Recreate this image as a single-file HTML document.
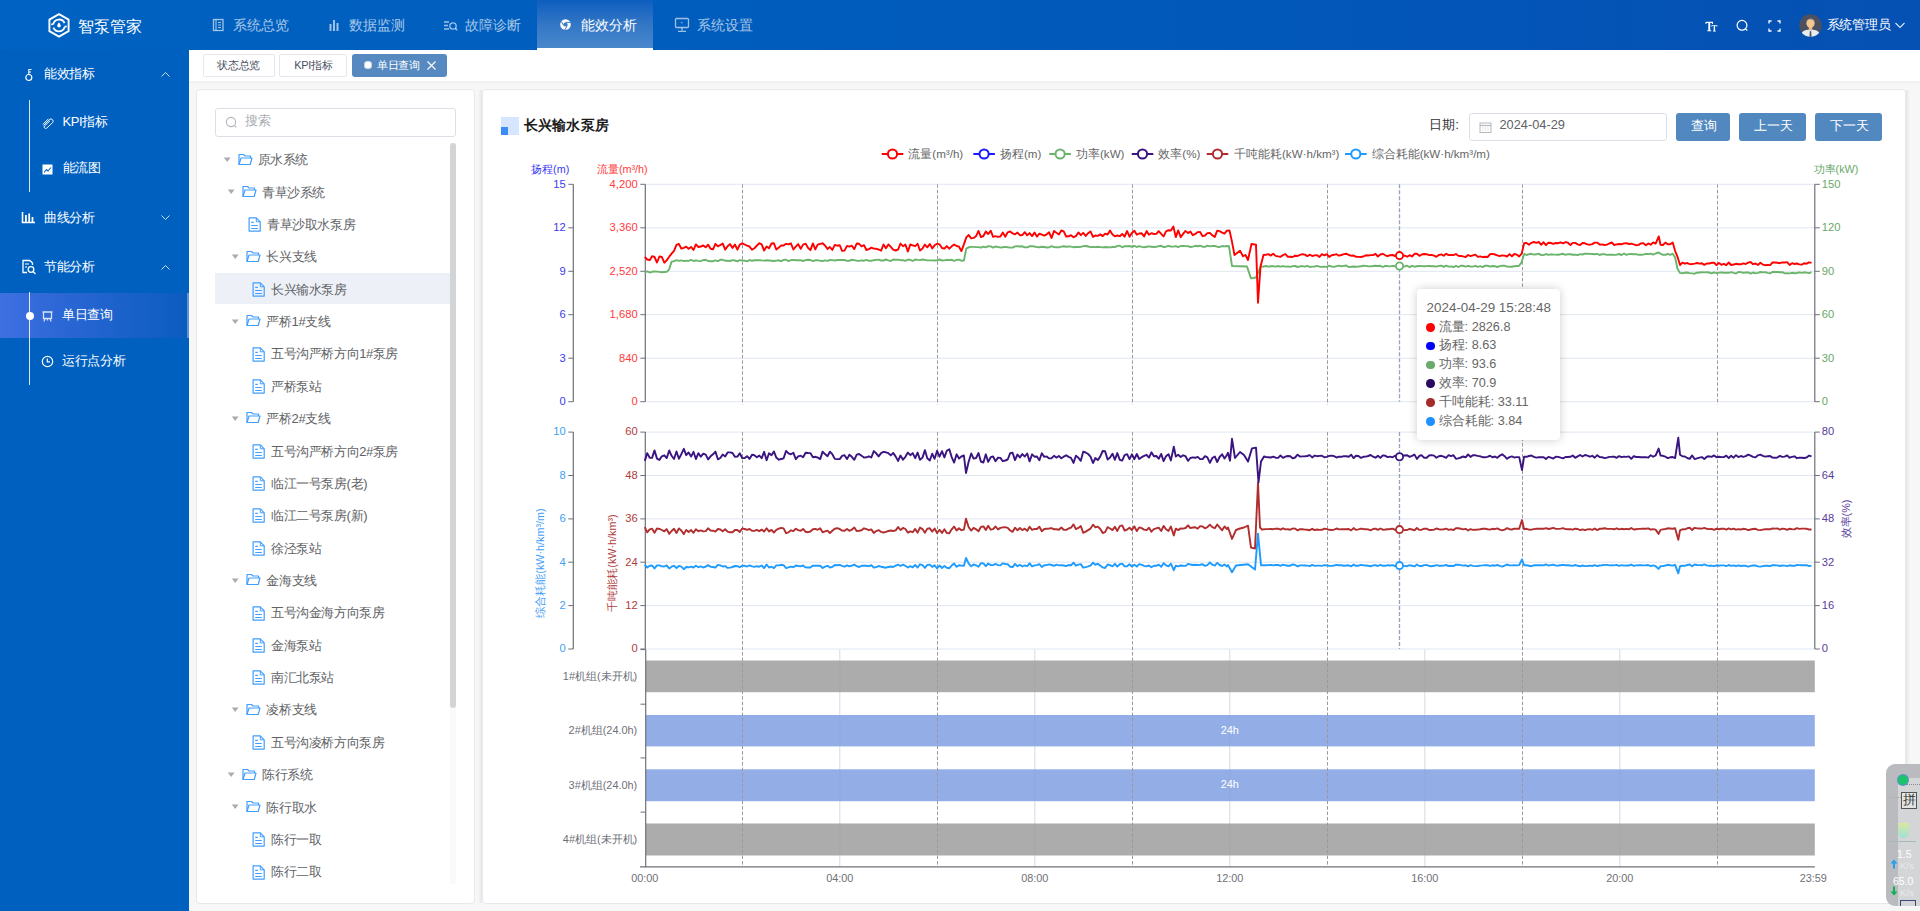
<!DOCTYPE html>
<html><head><meta charset="utf-8"><title>智泵管家</title>
<style>
html,body{margin:0;padding:0;width:1920px;height:911px;overflow:hidden;background:#fff;}
body{position:relative;font-family:"Liberation Sans",sans-serif;}
.t{position:absolute;white-space:nowrap;}
.b{position:absolute;}
</style></head><body>
<div class="b" style="left:0px;top:0px;width:1920px;height:50px;background:linear-gradient(90deg,#0062c2 0%,#005bbb 50%,#0550b3 100%);"></div>
<svg class="b" style="left:46px;top:12px" width="26" height="27" viewBox="0 0 26 27">
<path d="M13 2.2 L22.6 7.6 L22.6 19.2 L13 24.6 L3.4 19.2 L3.4 7.6 Z" fill="none" stroke="#fff" stroke-width="1.9" stroke-linejoin="round"/>
<path d="M7.2 12.2 A6 6 0 0 1 18.6 11.2" fill="none" stroke="#fff" stroke-width="1.8"/>
<path d="M18.8 14.6 A6 6 0 0 1 7.4 15.6" fill="none" stroke="#fff" stroke-width="1.8"/>
<path d="M5.2 12.3 L7.4 12.3" stroke="#fff" stroke-width="1.6"/><path d="M18.6 14.5 L20.8 14.5" stroke="#fff" stroke-width="1.6"/>
<path d="M13 10.2 C13 10.2 11.2 12.6 11.2 13.8 A1.8 1.8 0 0 0 14.8 13.8 C14.8 12.6 13 10.2 13 10.2 Z" fill="#fff"/>
</svg>
<div class="t" style="left:77.50px;top:17.26px;font-size:16.4px;line-height:19.68px;color:#fff;letter-spacing:0px;">智泵管家</div>
<div class="b" style="left:537px;top:0px;width:116px;height:50px;background:linear-gradient(180deg,#0d5dbf 0%,#2f74c4 45%,#4a88cb 100%);border-bottom:2.5px solid #fff;box-sizing:border-box;"></div>
<div class="t" style="left:232.70px;top:18.02px;font-size:13.8px;line-height:16.56px;color:rgba(255,255,255,0.66);">系统总览</div>
<div class="t" style="left:348.70px;top:18.02px;font-size:13.8px;line-height:16.56px;color:rgba(255,255,255,0.66);">数据监测</div>
<div class="t" style="left:464.70px;top:18.02px;font-size:13.8px;line-height:16.56px;color:rgba(255,255,255,0.66);">故障诊断</div>
<div class="t" style="left:581.30px;top:18.02px;font-size:13.8px;line-height:16.56px;color:#fff;">能效分析</div>
<div class="t" style="left:696.70px;top:18.02px;font-size:13.8px;line-height:16.56px;color:rgba(255,255,255,0.66);">系统设置</div>
<svg class="b" style="left:212px;top:18px" width="13" height="14"><rect x="1.5" y="1.5" width="9.5" height="11" fill="none" stroke="rgba(255,255,255,0.62)" stroke-width="1.3"/><path d="M4 1.5 V12.5 M6 4.5 H9 M6 7 H9 M6 9.5 H9" stroke="rgba(255,255,255,0.62)" stroke-width="1.1"/></svg>
<svg class="b" style="left:328px;top:18px" width="13" height="14"><rect x="1.5" y="6" width="2" height="7" fill="rgba(255,255,255,0.62)"/><rect x="5" y="2" width="2" height="11" fill="rgba(255,255,255,0.62)"/><rect x="8.5" y="5" width="2" height="8" fill="rgba(255,255,255,0.62)"/></svg>
<svg class="b" style="left:443px;top:18px" width="15" height="14"><path d="M1 4 H6 M1 7.5 H5 M1 11 H6" stroke="rgba(255,255,255,0.62)" stroke-width="1.3"/><circle cx="10" cy="8" r="3.2" fill="none" stroke="rgba(255,255,255,0.62)" stroke-width="1.3"/><path d="M12.3 10.3 L14.2 12.2" stroke="rgba(255,255,255,0.62)" stroke-width="1.3"/></svg>
<svg class="b" style="left:559px;top:18px" width="13" height="13" viewBox="0 0 13 13"><circle cx="6.5" cy="6.5" r="5.3" fill="#fff"/><circle cx="6.5" cy="6.5" r="2.1" fill="#3a7cc6"/><path d="M6.5 4.4 H11.4 M4.7 7.6 L2.2 3.4 M8.3 7.6 L5.9 11.7" stroke="#3a7cc6" stroke-width="1"/></svg>
<svg class="b" style="left:674px;top:17px" width="16" height="16"><rect x="1.5" y="1.5" width="13" height="9" rx="1" fill="none" stroke="rgba(255,255,255,0.62)" stroke-width="1.3"/><path d="M8 10.5 V13.5 M4 14.3 H12" stroke="rgba(255,255,255,0.62)" stroke-width="1.3"/><path d="M6.5 4.5 L9 6 L7.5 6.5 Z" fill="rgba(255,255,255,0.62)"/></svg>
<svg class="b" style="left:1705px;top:21px" width="13" height="11" viewBox="0 0 13 11"><path d="M0.5 0.8 H8 V3 H7.2 L6.9 2 H5.2 V9.3 L6.3 9.6 V10.3 H2.2 V9.6 L3.3 9.3 V2 H1.6 L1.3 3 H0.5 Z" fill="#fff"/><path d="M6.5 4.2 H12.3 V5.8 H11.7 L11.5 5.1 H10.1 V9.6 L10.9 9.9 V10.4 H7.9 V9.9 L8.7 9.6 V5.1 H7.3 L7.1 5.8 H6.5 Z" fill="#fff"/></svg>
<svg class="b" style="left:1735px;top:18px" width="15" height="15"><circle cx="7" cy="7.3" r="4.9" fill="none" stroke="#fff" stroke-width="1.2"/><path d="M10.4 10.7 L12.3 12.6" stroke="#fff" stroke-width="1.2"/></svg>
<svg class="b" style="left:1768px;top:19.5px" width="13" height="12"><path d="M1 3.5 V1 H3.5 M9.5 1 H12 V3.5 M12 8.5 V11 H9.5 M3.5 11 H1 V8.5" fill="none" stroke="#fff" stroke-width="1.3"/></svg>
<svg class="b" style="left:1799px;top:14px" width="23" height="23" viewBox="0 0 23 23"><defs><clipPath id="avc"><circle cx="11.5" cy="11.5" r="11.3"/></clipPath></defs>
<g clip-path="url(#avc)"><rect width="23" height="23" fill="#4b5160"/><path d="M1.5 23 C2 17.5 5 15.8 11.5 15.5 C18 15.8 21 17.5 21.5 23 Z" fill="#e9ecee"/><path d="M9.3 15.6 L11.5 18 L13.7 15.6 Z" fill="#cfd4d8"/><path d="M10.8 17.2 L12.2 17.2 L12.6 23 L10.4 23 Z" fill="#4a5666"/><rect x="9.8" y="12.5" width="3.4" height="3.5" fill="#eab987"/><ellipse cx="11.5" cy="9.3" rx="4.1" ry="4.6" fill="#f4c690"/><path d="M7.2 8.6 C6.8 3.6 16.2 3.6 15.8 8.6 C15.2 6.2 14 5.6 11.5 5.6 C9 5.6 7.8 6.2 7.2 8.6Z" fill="#8d968f"/></g></svg>
<div class="t" style="left:1826.50px;top:16.50px;font-size:13px;line-height:15.6px;color:#fff;letter-spacing:-0.25px;">系统管理员</div>
<svg class="b" style="left:1894px;top:21px" width="12" height="9"><path d="M1.5 2 L6 6.5 L10.5 2" fill="none" stroke="rgba(255,255,255,0.85)" stroke-width="1.1"/></svg>
<div class="b" style="left:0px;top:50px;width:189px;height:861px;background:#0060bf;"></div>
<div class="t" style="left:44.30px;top:66.30px;font-size:13px;line-height:15.6px;color:#fff;letter-spacing:-0.4px;">能效指标</div>
<div class="t" style="left:44.30px;top:209.70px;font-size:13px;line-height:15.6px;color:#fff;letter-spacing:-0.4px;">曲线分析</div>
<div class="t" style="left:44.30px;top:259.20px;font-size:13px;line-height:15.6px;color:#fff;letter-spacing:-0.4px;">节能分析</div>
<svg class="b" style="left:160px;top:70px" width="11" height="9"><path d="M1.5 6.5 L5.5 2.5 L9.5 6.5" fill="none" stroke="rgba(255,255,255,0.8)" stroke-width="1"/></svg>
<svg class="b" style="left:160px;top:213px" width="11" height="9"><path d="M1.5 2.5 L5.5 6.5 L9.5 2.5" fill="none" stroke="rgba(255,255,255,0.8)" stroke-width="1"/></svg>
<svg class="b" style="left:160px;top:263px" width="11" height="9"><path d="M1.5 6.5 L5.5 2.5 L9.5 6.5" fill="none" stroke="rgba(255,255,255,0.8)" stroke-width="1"/></svg>
<svg class="b" style="left:24px;top:68px" width="10" height="14"><circle cx="4.8" cy="9.5" r="3" fill="none" stroke="#fff" stroke-width="1.2"/><path d="M4.8 6.5 V1.5 H7.5 M4.8 4 H7" fill="none" stroke="#fff" stroke-width="1.1"/></svg>
<svg class="b" style="left:21px;top:211px" width="15" height="13"><path d="M1.5 1 V11.5 H14" fill="none" stroke="#fff" stroke-width="1.6"/><rect x="4" y="4" width="1.8" height="7" fill="#fff"/><rect x="7.3" y="2.5" width="1.8" height="8.5" fill="#fff"/><rect x="10.6" y="6" width="1.8" height="5" fill="#fff"/></svg>
<svg class="b" style="left:21px;top:259px" width="16" height="16"><path d="M9 1.5 H2 V13.5 H6" fill="none" stroke="#fff" stroke-width="1.3"/><path d="M9 1.5 L11.5 4 V6" fill="none" stroke="#fff" stroke-width="1.3"/><path d="M4 5 H8 M4 8 H6" stroke="#fff" stroke-width="1.2"/><circle cx="10" cy="10.5" r="2.8" fill="none" stroke="#fff" stroke-width="1.3"/><path d="M12 12.5 L14.5 15" stroke="#fff" stroke-width="1.3"/></svg>
<div class="b" style="left:28.5px;top:100px;width:1.5px;height:92px;background:rgba(255,255,255,0.85);"></div>
<div class="b" style="left:0px;top:293px;width:189px;height:45px;background:linear-gradient(90deg,#3f70e2 0%,#2a66d4 35%,#0a5cc0 100%);"></div>
<div class="b" style="left:186.5px;top:293px;width:2.5px;height:45px;background:rgba(255,255,255,0.35);"></div>
<div class="b" style="left:28.5px;top:292px;width:1.5px;height:93px;background:rgba(255,255,255,0.85);"></div>
<div class="b" style="left:25.5px;top:311.8px;width:8px;height:8px;border-radius:50%;background:#fff"></div>
<div class="t" style="left:62.50px;top:114.30px;font-size:13px;line-height:15.6px;color:#fff;letter-spacing:-0.4px;">KPI指标</div>
<div class="t" style="left:62.50px;top:160.10px;font-size:13px;line-height:15.6px;color:#fff;letter-spacing:-0.4px;">能流图</div>
<div class="t" style="left:62.30px;top:306.70px;font-size:13px;line-height:15.6px;color:#fff;letter-spacing:-0.4px;">单日查询</div>
<div class="t" style="left:62.30px;top:352.50px;font-size:13px;line-height:15.6px;color:#fff;letter-spacing:-0.4px;">运行点分析</div>
<svg class="b" style="left:41px;top:117px" width="13" height="12" style="opacity:0.9"><path d="M2.5 8.5 L8.5 2.5 A2.2 2.2 0 0 1 11.6 5.6 L5.6 11.2 A1.5 1.5 0 0 1 3.5 9.1 L9 3.8" fill="none" stroke="#fff" stroke-width="0.95"/><path d="M1.8 7.4 L7.4 1.8" fill="none" stroke="#fff" stroke-width="0.95"/></svg>
<svg class="b" style="left:42px;top:164px" width="11" height="11"><rect x="0.5" y="0.5" width="10" height="10" fill="#fff"/><path d="M2 8.5 L4.5 5.5 L6 7 L9 3.5" fill="none" stroke="#0060bf" stroke-width="1.1"/></svg>
<svg class="b" style="left:41px;top:310px;opacity:0.8" width="13" height="13"><path d="M1.5 2 H11.5 M2.5 2 V8.5 H10.5 V2" fill="none" stroke="#fff" stroke-width="1.3"/><path d="M4 8.5 L3 11.5 M9 8.5 L10 11.5 M6.5 8.5 V10.5" stroke="#fff" stroke-width="1.2"/></svg>
<svg class="b" style="left:41px;top:355px" width="13" height="13"><circle cx="6.5" cy="6.5" r="5.2" fill="none" stroke="#fff" stroke-width="1.2"/><path d="M6.3 3.5 V6.8 H9" fill="none" stroke="#fff" stroke-width="1.2"/></svg>
<div class="b" style="left:189px;top:50px;width:1731px;height:31px;background:#fff;"></div>
<div class="b" style="left:189px;top:81px;width:1731px;height:830px;background:#f7f7f8;"></div>
<div class="b" style="left:189px;top:81px;width:1731px;height:4px;background:linear-gradient(180deg,#eeeff1,#f7f7f8);"></div>
<div class="b" style="left:203px;top:54px;width:72px;height:23px;background:#fff;border:1px solid #e4e7ee;box-sizing:border-box;border-radius:2px;"></div>
<div class="t" style="left:217.30px;top:58.70px;font-size:11px;line-height:13.2px;color:#495060;letter-spacing:-0.35px;">状态总览</div>
<div class="b" style="left:279px;top:54px;width:68px;height:23px;background:#fff;border:1px solid #e4e7ee;box-sizing:border-box;border-radius:2px;"></div>
<div class="t" style="left:294.30px;top:58.70px;font-size:11px;line-height:13.2px;color:#495060;letter-spacing:-0.35px;">KPI指标</div>
<div class="b" style="left:352px;top:54px;width:95px;height:23px;background:#5589c0;border-radius:3px;"></div>
<div class="b" style="left:363.6px;top:61.3px;width:8px;height:8px;border-radius:50%;background:#fff;box-shadow:0 0 0 0.8px #b8cde6 inset"></div>
<div class="b" style="left:365.1px;top:62.8px;width:5px;height:5px;border-radius:50%;background:#fff"></div>
<div class="t" style="left:377.10px;top:58.70px;font-size:11px;line-height:13.2px;color:#fff;letter-spacing:-0.35px;">单日查询</div>
<svg class="b" style="left:426px;top:60px" width="11" height="11"><path d="M1.5 1.5 L9.5 9.5 M9.5 1.5 L1.5 9.5" stroke="#fff" stroke-width="1.1"/></svg>
<div class="b" style="left:196px;top:89px;width:279px;height:815px;background:#fff;border:1px solid #e6e8ee;box-sizing:border-box;border-radius:4px;"></div>
<div class="b" style="left:478px;top:90px;width:4px;height:813px;background:linear-gradient(90deg,rgba(0,0,0,0) 0%,rgba(0,0,0,0.07) 100%);"></div>
<div class="b" style="left:1906px;top:90px;width:4px;height:813px;background:linear-gradient(90deg,rgba(0,0,0,0.07) 0%,rgba(0,0,0,0.0) 100%);"></div>
<div class="b" style="left:482px;top:89px;width:1424px;height:815px;background:#fff;border:1px solid #e6e8ee;box-sizing:border-box;border-radius:4px;"></div>
<div class="b" style="left:215px;top:108px;width:241px;height:29px;border:1px solid #dcdfe6;box-sizing:border-box;border-radius:3px;background:#fff;"></div>
<svg class="b" style="left:225px;top:116px" width="13" height="13"><circle cx="6" cy="6" r="4.6" fill="none" stroke="#b0b3b8" stroke-width="1.1"/><path d="M9.3 9.3 L11.3 11.3" stroke="#b0b3b8" stroke-width="1.1"/></svg>
<div class="t" style="left:244.50px;top:113.68px;font-size:12.7px;line-height:15.24px;color:#a8abb2;">搜索</div>
<div class="b" style="left:449.5px;top:143px;width:6.5px;height:741px;background:#fafafa;"></div>
<div class="b" style="left:450px;top:143px;width:6px;height:565px;background:#d3d4d6;border-radius:3px;"></div>
<div class="b" style="left:215px;top:272.7px;width:234.5px;height:31.600000000000023px;background:#edf1f7;"></div>
<svg class="b" style="left:222.6px;top:156.8px" width="9" height="6"><path d="M0.8 0.6 H7.6 L4.2 4.9 Z" fill="#a8abb2"/></svg>
<svg class="b" style="left:237.6px;top:152.5px" width="15" height="13" viewBox="0 0 15 13"><path d="M1 11.5 V1.5 H5.5 L7 3 H12.5 V5" fill="none" stroke="#409eff" stroke-width="1.2" stroke-linejoin="round"/><path d="M1 11.5 L3 5 H14 L12.2 11.5 Z" fill="none" stroke="#409eff" stroke-width="1.2" stroke-linejoin="round"/></svg>
<div class="t" style="left:257.60px;top:152.20px;font-size:13px;line-height:15.6px;color:#606266;letter-spacing:-0.4px;">原水系统</div>
<svg class="b" style="left:227.0px;top:189.2px" width="9" height="6"><path d="M0.8 0.6 H7.6 L4.2 4.9 Z" fill="#a8abb2"/></svg>
<svg class="b" style="left:242.0px;top:184.9px" width="15" height="13" viewBox="0 0 15 13"><path d="M1 11.5 V1.5 H5.5 L7 3 H12.5 V5" fill="none" stroke="#409eff" stroke-width="1.2" stroke-linejoin="round"/><path d="M1 11.5 L3 5 H14 L12.2 11.5 Z" fill="none" stroke="#409eff" stroke-width="1.2" stroke-linejoin="round"/></svg>
<div class="t" style="left:262.00px;top:184.57px;font-size:13px;line-height:15.6px;color:#606266;letter-spacing:-0.4px;">青草沙系统</div>
<svg class="b" style="left:247.7px;top:217.1px" width="14" height="15" viewBox="0 0 14 15"><path d="M1.1 0.9 H8.3 L12.2 4.8 V14.1 H1.1 Z" fill="none" stroke="#409eff" stroke-width="1.2" stroke-linejoin="round"/><path d="M8.3 0.9 V4.8 H12.2" fill="none" stroke="#409eff" stroke-width="1.0"/><path d="M3.2 5.4 H5.8 M3.2 8.5 H9.8 M3.2 11.5 H9.8" stroke="#409eff" stroke-width="1.1"/></svg>
<div class="t" style="left:267.00px;top:216.94px;font-size:13px;line-height:15.6px;color:#606266;letter-spacing:-0.4px;">青草沙取水泵房</div>
<svg class="b" style="left:231.4px;top:253.9px" width="9" height="6"><path d="M0.8 0.6 H7.6 L4.2 4.9 Z" fill="#a8abb2"/></svg>
<svg class="b" style="left:246.4px;top:249.6px" width="15" height="13" viewBox="0 0 15 13"><path d="M1 11.5 V1.5 H5.5 L7 3 H12.5 V5" fill="none" stroke="#409eff" stroke-width="1.2" stroke-linejoin="round"/><path d="M1 11.5 L3 5 H14 L12.2 11.5 Z" fill="none" stroke="#409eff" stroke-width="1.2" stroke-linejoin="round"/></svg>
<div class="t" style="left:266.40px;top:249.30px;font-size:13px;line-height:15.6px;color:#606266;letter-spacing:-0.4px;">长兴支线</div>
<svg class="b" style="left:251.7px;top:281.9px" width="14" height="15" viewBox="0 0 14 15"><path d="M1.1 0.9 H8.3 L12.2 4.8 V14.1 H1.1 Z" fill="none" stroke="#409eff" stroke-width="1.2" stroke-linejoin="round"/><path d="M8.3 0.9 V4.8 H12.2" fill="none" stroke="#409eff" stroke-width="1.0"/><path d="M3.2 5.4 H5.8 M3.2 8.5 H9.8 M3.2 11.5 H9.8" stroke="#409eff" stroke-width="1.1"/></svg>
<div class="t" style="left:271.00px;top:281.67px;font-size:13px;line-height:15.6px;color:#606266;letter-spacing:-0.4px;">长兴输水泵房</div>
<svg class="b" style="left:231.4px;top:318.6px" width="9" height="6"><path d="M0.8 0.6 H7.6 L4.2 4.9 Z" fill="#a8abb2"/></svg>
<svg class="b" style="left:246.4px;top:314.3px" width="15" height="13" viewBox="0 0 15 13"><path d="M1 11.5 V1.5 H5.5 L7 3 H12.5 V5" fill="none" stroke="#409eff" stroke-width="1.2" stroke-linejoin="round"/><path d="M1 11.5 L3 5 H14 L12.2 11.5 Z" fill="none" stroke="#409eff" stroke-width="1.2" stroke-linejoin="round"/></svg>
<div class="t" style="left:266.40px;top:314.04px;font-size:13px;line-height:15.6px;color:#606266;letter-spacing:-0.4px;">严桥1#支线</div>
<svg class="b" style="left:251.7px;top:346.6px" width="14" height="15" viewBox="0 0 14 15"><path d="M1.1 0.9 H8.3 L12.2 4.8 V14.1 H1.1 Z" fill="none" stroke="#409eff" stroke-width="1.2" stroke-linejoin="round"/><path d="M8.3 0.9 V4.8 H12.2" fill="none" stroke="#409eff" stroke-width="1.0"/><path d="M3.2 5.4 H5.8 M3.2 8.5 H9.8 M3.2 11.5 H9.8" stroke="#409eff" stroke-width="1.1"/></svg>
<div class="t" style="left:271.00px;top:346.41px;font-size:13px;line-height:15.6px;color:#606266;letter-spacing:-0.4px;">五号沟严桥方向1#泵房</div>
<svg class="b" style="left:251.7px;top:379.0px" width="14" height="15" viewBox="0 0 14 15"><path d="M1.1 0.9 H8.3 L12.2 4.8 V14.1 H1.1 Z" fill="none" stroke="#409eff" stroke-width="1.2" stroke-linejoin="round"/><path d="M8.3 0.9 V4.8 H12.2" fill="none" stroke="#409eff" stroke-width="1.0"/><path d="M3.2 5.4 H5.8 M3.2 8.5 H9.8 M3.2 11.5 H9.8" stroke="#409eff" stroke-width="1.1"/></svg>
<div class="t" style="left:271.00px;top:378.78px;font-size:13px;line-height:15.6px;color:#606266;letter-spacing:-0.4px;">严桥泵站</div>
<svg class="b" style="left:231.4px;top:415.7px" width="9" height="6"><path d="M0.8 0.6 H7.6 L4.2 4.9 Z" fill="#a8abb2"/></svg>
<svg class="b" style="left:246.4px;top:411.4px" width="15" height="13" viewBox="0 0 15 13"><path d="M1 11.5 V1.5 H5.5 L7 3 H12.5 V5" fill="none" stroke="#409eff" stroke-width="1.2" stroke-linejoin="round"/><path d="M1 11.5 L3 5 H14 L12.2 11.5 Z" fill="none" stroke="#409eff" stroke-width="1.2" stroke-linejoin="round"/></svg>
<div class="t" style="left:266.40px;top:411.15px;font-size:13px;line-height:15.6px;color:#606266;letter-spacing:-0.4px;">严桥2#支线</div>
<svg class="b" style="left:251.7px;top:443.7px" width="14" height="15" viewBox="0 0 14 15"><path d="M1.1 0.9 H8.3 L12.2 4.8 V14.1 H1.1 Z" fill="none" stroke="#409eff" stroke-width="1.2" stroke-linejoin="round"/><path d="M8.3 0.9 V4.8 H12.2" fill="none" stroke="#409eff" stroke-width="1.0"/><path d="M3.2 5.4 H5.8 M3.2 8.5 H9.8 M3.2 11.5 H9.8" stroke="#409eff" stroke-width="1.1"/></svg>
<div class="t" style="left:271.00px;top:443.51px;font-size:13px;line-height:15.6px;color:#606266;letter-spacing:-0.4px;">五号沟严桥方向2#泵房</div>
<svg class="b" style="left:251.7px;top:476.1px" width="14" height="15" viewBox="0 0 14 15"><path d="M1.1 0.9 H8.3 L12.2 4.8 V14.1 H1.1 Z" fill="none" stroke="#409eff" stroke-width="1.2" stroke-linejoin="round"/><path d="M8.3 0.9 V4.8 H12.2" fill="none" stroke="#409eff" stroke-width="1.0"/><path d="M3.2 5.4 H5.8 M3.2 8.5 H9.8 M3.2 11.5 H9.8" stroke="#409eff" stroke-width="1.1"/></svg>
<div class="t" style="left:271.00px;top:475.88px;font-size:13px;line-height:15.6px;color:#606266;letter-spacing:-0.4px;">临江一号泵房(老)</div>
<svg class="b" style="left:251.7px;top:508.4px" width="14" height="15" viewBox="0 0 14 15"><path d="M1.1 0.9 H8.3 L12.2 4.8 V14.1 H1.1 Z" fill="none" stroke="#409eff" stroke-width="1.2" stroke-linejoin="round"/><path d="M8.3 0.9 V4.8 H12.2" fill="none" stroke="#409eff" stroke-width="1.0"/><path d="M3.2 5.4 H5.8 M3.2 8.5 H9.8 M3.2 11.5 H9.8" stroke="#409eff" stroke-width="1.1"/></svg>
<div class="t" style="left:271.00px;top:508.25px;font-size:13px;line-height:15.6px;color:#606266;letter-spacing:-0.4px;">临江二号泵房(新)</div>
<svg class="b" style="left:251.7px;top:540.8px" width="14" height="15" viewBox="0 0 14 15"><path d="M1.1 0.9 H8.3 L12.2 4.8 V14.1 H1.1 Z" fill="none" stroke="#409eff" stroke-width="1.2" stroke-linejoin="round"/><path d="M8.3 0.9 V4.8 H12.2" fill="none" stroke="#409eff" stroke-width="1.0"/><path d="M3.2 5.4 H5.8 M3.2 8.5 H9.8 M3.2 11.5 H9.8" stroke="#409eff" stroke-width="1.1"/></svg>
<div class="t" style="left:271.00px;top:540.62px;font-size:13px;line-height:15.6px;color:#606266;letter-spacing:-0.4px;">徐泾泵站</div>
<svg class="b" style="left:231.4px;top:577.6px" width="9" height="6"><path d="M0.8 0.6 H7.6 L4.2 4.9 Z" fill="#a8abb2"/></svg>
<svg class="b" style="left:246.4px;top:573.3px" width="15" height="13" viewBox="0 0 15 13"><path d="M1 11.5 V1.5 H5.5 L7 3 H12.5 V5" fill="none" stroke="#409eff" stroke-width="1.2" stroke-linejoin="round"/><path d="M1 11.5 L3 5 H14 L12.2 11.5 Z" fill="none" stroke="#409eff" stroke-width="1.2" stroke-linejoin="round"/></svg>
<div class="t" style="left:266.40px;top:572.99px;font-size:13px;line-height:15.6px;color:#606266;letter-spacing:-0.4px;">金海支线</div>
<svg class="b" style="left:251.7px;top:605.6px" width="14" height="15" viewBox="0 0 14 15"><path d="M1.1 0.9 H8.3 L12.2 4.8 V14.1 H1.1 Z" fill="none" stroke="#409eff" stroke-width="1.2" stroke-linejoin="round"/><path d="M8.3 0.9 V4.8 H12.2" fill="none" stroke="#409eff" stroke-width="1.0"/><path d="M3.2 5.4 H5.8 M3.2 8.5 H9.8 M3.2 11.5 H9.8" stroke="#409eff" stroke-width="1.1"/></svg>
<div class="t" style="left:271.00px;top:605.35px;font-size:13px;line-height:15.6px;color:#606266;letter-spacing:-0.4px;">五号沟金海方向泵房</div>
<svg class="b" style="left:251.7px;top:637.9px" width="14" height="15" viewBox="0 0 14 15"><path d="M1.1 0.9 H8.3 L12.2 4.8 V14.1 H1.1 Z" fill="none" stroke="#409eff" stroke-width="1.2" stroke-linejoin="round"/><path d="M8.3 0.9 V4.8 H12.2" fill="none" stroke="#409eff" stroke-width="1.0"/><path d="M3.2 5.4 H5.8 M3.2 8.5 H9.8 M3.2 11.5 H9.8" stroke="#409eff" stroke-width="1.1"/></svg>
<div class="t" style="left:271.00px;top:637.72px;font-size:13px;line-height:15.6px;color:#606266;letter-spacing:-0.4px;">金海泵站</div>
<svg class="b" style="left:251.7px;top:670.3px" width="14" height="15" viewBox="0 0 14 15"><path d="M1.1 0.9 H8.3 L12.2 4.8 V14.1 H1.1 Z" fill="none" stroke="#409eff" stroke-width="1.2" stroke-linejoin="round"/><path d="M8.3 0.9 V4.8 H12.2" fill="none" stroke="#409eff" stroke-width="1.0"/><path d="M3.2 5.4 H5.8 M3.2 8.5 H9.8 M3.2 11.5 H9.8" stroke="#409eff" stroke-width="1.1"/></svg>
<div class="t" style="left:271.00px;top:670.09px;font-size:13px;line-height:15.6px;color:#606266;letter-spacing:-0.4px;">南汇北泵站</div>
<svg class="b" style="left:231.4px;top:707.1px" width="9" height="6"><path d="M0.8 0.6 H7.6 L4.2 4.9 Z" fill="#a8abb2"/></svg>
<svg class="b" style="left:246.4px;top:702.8px" width="15" height="13" viewBox="0 0 15 13"><path d="M1 11.5 V1.5 H5.5 L7 3 H12.5 V5" fill="none" stroke="#409eff" stroke-width="1.2" stroke-linejoin="round"/><path d="M1 11.5 L3 5 H14 L12.2 11.5 Z" fill="none" stroke="#409eff" stroke-width="1.2" stroke-linejoin="round"/></svg>
<div class="t" style="left:266.40px;top:702.46px;font-size:13px;line-height:15.6px;color:#606266;letter-spacing:-0.4px;">凌桥支线</div>
<svg class="b" style="left:251.7px;top:735.0px" width="14" height="15" viewBox="0 0 14 15"><path d="M1.1 0.9 H8.3 L12.2 4.8 V14.1 H1.1 Z" fill="none" stroke="#409eff" stroke-width="1.2" stroke-linejoin="round"/><path d="M8.3 0.9 V4.8 H12.2" fill="none" stroke="#409eff" stroke-width="1.0"/><path d="M3.2 5.4 H5.8 M3.2 8.5 H9.8 M3.2 11.5 H9.8" stroke="#409eff" stroke-width="1.1"/></svg>
<div class="t" style="left:271.00px;top:734.83px;font-size:13px;line-height:15.6px;color:#606266;letter-spacing:-0.4px;">五号沟凌桥方向泵房</div>
<svg class="b" style="left:227.0px;top:771.8px" width="9" height="6"><path d="M0.8 0.6 H7.6 L4.2 4.9 Z" fill="#a8abb2"/></svg>
<svg class="b" style="left:242.0px;top:767.5px" width="15" height="13" viewBox="0 0 15 13"><path d="M1 11.5 V1.5 H5.5 L7 3 H12.5 V5" fill="none" stroke="#409eff" stroke-width="1.2" stroke-linejoin="round"/><path d="M1 11.5 L3 5 H14 L12.2 11.5 Z" fill="none" stroke="#409eff" stroke-width="1.2" stroke-linejoin="round"/></svg>
<div class="t" style="left:262.00px;top:767.20px;font-size:13px;line-height:15.6px;color:#606266;letter-spacing:-0.4px;">陈行系统</div>
<svg class="b" style="left:231.4px;top:804.2px" width="9" height="6"><path d="M0.8 0.6 H7.6 L4.2 4.9 Z" fill="#a8abb2"/></svg>
<svg class="b" style="left:246.4px;top:799.9px" width="15" height="13" viewBox="0 0 15 13"><path d="M1 11.5 V1.5 H5.5 L7 3 H12.5 V5" fill="none" stroke="#409eff" stroke-width="1.2" stroke-linejoin="round"/><path d="M1 11.5 L3 5 H14 L12.2 11.5 Z" fill="none" stroke="#409eff" stroke-width="1.2" stroke-linejoin="round"/></svg>
<div class="t" style="left:266.40px;top:799.56px;font-size:13px;line-height:15.6px;color:#606266;letter-spacing:-0.4px;">陈行取水</div>
<svg class="b" style="left:251.7px;top:832.1px" width="14" height="15" viewBox="0 0 14 15"><path d="M1.1 0.9 H8.3 L12.2 4.8 V14.1 H1.1 Z" fill="none" stroke="#409eff" stroke-width="1.2" stroke-linejoin="round"/><path d="M8.3 0.9 V4.8 H12.2" fill="none" stroke="#409eff" stroke-width="1.0"/><path d="M3.2 5.4 H5.8 M3.2 8.5 H9.8 M3.2 11.5 H9.8" stroke="#409eff" stroke-width="1.1"/></svg>
<div class="t" style="left:271.00px;top:831.93px;font-size:13px;line-height:15.6px;color:#606266;letter-spacing:-0.4px;">陈行一取</div>
<svg class="b" style="left:251.7px;top:864.5px" width="14" height="15" viewBox="0 0 14 15"><path d="M1.1 0.9 H8.3 L12.2 4.8 V14.1 H1.1 Z" fill="none" stroke="#409eff" stroke-width="1.2" stroke-linejoin="round"/><path d="M8.3 0.9 V4.8 H12.2" fill="none" stroke="#409eff" stroke-width="1.0"/><path d="M3.2 5.4 H5.8 M3.2 8.5 H9.8 M3.2 11.5 H9.8" stroke="#409eff" stroke-width="1.1"/></svg>
<div class="t" style="left:271.00px;top:864.30px;font-size:13px;line-height:15.6px;color:#606266;letter-spacing:-0.4px;">陈行二取</div>
<div class="b" style="left:501px;top:117px;width:18px;height:18px;background:#d6e6ff;"></div>
<div class="b" style="left:501px;top:127px;width:7px;height:8px;background:#3c8cf6;"></div>
<div class="t" style="left:523.80px;top:116.80px;font-size:14px;line-height:16.8px;color:#1a1a1a;font-weight:bold;letter-spacing:0.2px;">长兴输水泵房</div>
<div class="t" style="left:1429.30px;top:116.68px;font-size:13.2px;line-height:15.84px;color:#303133;">日期:</div>
<div class="b" style="left:1469px;top:113px;width:198px;height:27.5px;border:1px solid #dcdfe6;box-sizing:border-box;border-radius:3px;background:#fff;"></div>
<svg class="b" style="left:1479px;top:121px" width="13" height="12"><rect x="1" y="2" width="11" height="9.5" fill="none" stroke="#b4b7bd" stroke-width="1"/><path d="M1 4.5 H12" stroke="#b4b7bd" stroke-width="1.2"/><path d="M3.5 7 H4.5 M6 7 H7 M8.5 7 H9.5 M3.5 9 H4.5 M6 9 H7 M8.5 9 H9.5" stroke="#c4c7cc" stroke-width="0.9"/></svg>
<div class="t" style="left:1499.50px;top:117.32px;font-size:12.8px;line-height:15.36px;color:#606266;">2024-04-29</div>
<div class="b" style="left:1676px;top:113px;width:54px;height:27.5px;background:#5188c0;border-radius:3px;"></div>
<div class="t" style="left:1691.30px;top:118.68px;font-size:12.7px;line-height:15.24px;color:#fff;">查询</div>
<div class="b" style="left:1739px;top:113px;width:67px;height:27.5px;background:#5188c0;border-radius:3px;"></div>
<div class="t" style="left:1754.00px;top:118.68px;font-size:12.7px;line-height:15.24px;color:#fff;">上一天</div>
<div class="b" style="left:1815px;top:113px;width:67px;height:27.5px;background:#5188c0;border-radius:3px;"></div>
<div class="t" style="left:1830.00px;top:118.68px;font-size:12.7px;line-height:15.24px;color:#fff;">下一天</div>
<svg class="b" style="left:0;top:140px" width="1920" height="30">
<line x1="881.7" y1="14" x2="903.3000000000001" y2="14" stroke="#ff0000" stroke-width="2"/><circle cx="892.5" cy="14" r="4.6" fill="#fff" stroke="#ff0000" stroke-width="2"/>
<line x1="973.3" y1="14" x2="994.9" y2="14" stroke="#1a1aff" stroke-width="2"/><circle cx="984.0999999999999" cy="14" r="4.6" fill="#fff" stroke="#1a1aff" stroke-width="2"/>
<line x1="1049.3" y1="14" x2="1070.8999999999999" y2="14" stroke="#6ab46c" stroke-width="2"/><circle cx="1060.1" cy="14" r="4.6" fill="#fff" stroke="#6ab46c" stroke-width="2"/>
<line x1="1131.7" y1="14" x2="1153.3" y2="14" stroke="#3a1480" stroke-width="2"/><circle cx="1142.5" cy="14" r="4.6" fill="#fff" stroke="#3a1480" stroke-width="2"/>
<line x1="1206.7" y1="14" x2="1228.3" y2="14" stroke="#b22d2d" stroke-width="2"/><circle cx="1217.5" cy="14" r="4.6" fill="#fff" stroke="#b22d2d" stroke-width="2"/>
<line x1="1345" y1="14" x2="1366.6" y2="14" stroke="#1e9bff" stroke-width="2"/><circle cx="1355.8" cy="14" r="4.6" fill="#fff" stroke="#1e9bff" stroke-width="2"/>
</svg>
<div class="t" style="left:908.30px;top:147.04px;font-size:11.6px;line-height:13.92px;color:#666;">流量(m³/h)</div>
<div class="t" style="left:1000.00px;top:147.04px;font-size:11.6px;line-height:13.92px;color:#666;">扬程(m)</div>
<div class="t" style="left:1076.00px;top:147.04px;font-size:11.6px;line-height:13.92px;color:#666;">功率(kW)</div>
<div class="t" style="left:1158.30px;top:147.04px;font-size:11.6px;line-height:13.92px;color:#666;">效率(%)</div>
<div class="t" style="left:1234.00px;top:147.04px;font-size:11.6px;line-height:13.92px;color:#666;">千吨能耗(kW·h/km³)</div>
<div class="t" style="left:1371.70px;top:147.04px;font-size:11.6px;line-height:13.92px;color:#666;">综合耗能(kW·h/km³/m)</div>
<svg class="b" style="left:0;top:0" width="1920" height="911" viewBox="0 0 1920 911">
<line x1="645.3" y1="184.3" x2="1814.8" y2="184.3" stroke="#e0e6f1" stroke-width="1"/>
<line x1="645.3" y1="227.8" x2="1814.8" y2="227.8" stroke="#e0e6f1" stroke-width="1"/>
<line x1="645.3" y1="271.3" x2="1814.8" y2="271.3" stroke="#e0e6f1" stroke-width="1"/>
<line x1="645.3" y1="314.7" x2="1814.8" y2="314.7" stroke="#e0e6f1" stroke-width="1"/>
<line x1="645.3" y1="358.2" x2="1814.8" y2="358.2" stroke="#e0e6f1" stroke-width="1"/>
<line x1="645.3" y1="401.7" x2="1814.8" y2="401.7" stroke="#e0e6f1" stroke-width="1"/>
<line x1="645.3" y1="432.1" x2="1814.8" y2="432.1" stroke="#e0e6f1" stroke-width="1"/>
<line x1="645.3" y1="475.5" x2="1814.8" y2="475.5" stroke="#e0e6f1" stroke-width="1"/>
<line x1="645.3" y1="518.9" x2="1814.8" y2="518.9" stroke="#e0e6f1" stroke-width="1"/>
<line x1="645.3" y1="562.2" x2="1814.8" y2="562.2" stroke="#e0e6f1" stroke-width="1"/>
<line x1="645.3" y1="605.6" x2="1814.8" y2="605.6" stroke="#e0e6f1" stroke-width="1"/>
<line x1="645.3" y1="649.0" x2="1814.8" y2="649.0" stroke="#e0e6f1" stroke-width="1"/>
<line x1="839.8" y1="649.6" x2="839.8" y2="866.9" stroke="#e0e6f1" stroke-width="1"/>
<line x1="1034.8" y1="649.6" x2="1034.8" y2="866.9" stroke="#e0e6f1" stroke-width="1"/>
<line x1="1229.8" y1="649.6" x2="1229.8" y2="866.9" stroke="#e0e6f1" stroke-width="1"/>
<line x1="1424.8" y1="649.6" x2="1424.8" y2="866.9" stroke="#e0e6f1" stroke-width="1"/>
<line x1="1619.8" y1="649.6" x2="1619.8" y2="866.9" stroke="#e0e6f1" stroke-width="1"/>
<rect x="645.8" y="660.5" width="1169.0" height="31.7" fill="#acacac"/>
<rect x="645.8" y="715.0" width="1169.0" height="31.4" fill="#93aee6"/>
<rect x="645.8" y="769.3" width="1169.0" height="31.9" fill="#93aee6"/>
<rect x="645.8" y="823.5" width="1169.0" height="32.0" fill="#acacac"/>
<line x1="839.8" y1="649.6" x2="839.8" y2="866.9" stroke="#8890b0" stroke-opacity="0.12" stroke-width="1"/>
<line x1="1034.8" y1="649.6" x2="1034.8" y2="866.9" stroke="#8890b0" stroke-opacity="0.12" stroke-width="1"/>
<line x1="1229.8" y1="649.6" x2="1229.8" y2="866.9" stroke="#8890b0" stroke-opacity="0.12" stroke-width="1"/>
<line x1="1424.8" y1="649.6" x2="1424.8" y2="866.9" stroke="#8890b0" stroke-opacity="0.12" stroke-width="1"/>
<line x1="1619.8" y1="649.6" x2="1619.8" y2="866.9" stroke="#8890b0" stroke-opacity="0.12" stroke-width="1"/>
<line x1="742.5" y1="184.3" x2="742.5" y2="404.7" stroke="#9a9a9a" stroke-width="1" stroke-dasharray="3.5,2"/>
<line x1="742.5" y1="432.1" x2="742.5" y2="866.9" stroke="#9a9a9a" stroke-width="1" stroke-dasharray="3.5,2"/>
<line x1="937.5" y1="184.3" x2="937.5" y2="404.7" stroke="#9a9a9a" stroke-width="1" stroke-dasharray="3.5,2"/>
<line x1="937.5" y1="432.1" x2="937.5" y2="866.9" stroke="#9a9a9a" stroke-width="1" stroke-dasharray="3.5,2"/>
<line x1="1132.5" y1="184.3" x2="1132.5" y2="404.7" stroke="#9a9a9a" stroke-width="1" stroke-dasharray="3.5,2"/>
<line x1="1132.5" y1="432.1" x2="1132.5" y2="866.9" stroke="#9a9a9a" stroke-width="1" stroke-dasharray="3.5,2"/>
<line x1="1327.5" y1="184.3" x2="1327.5" y2="404.7" stroke="#9a9a9a" stroke-width="1" stroke-dasharray="3.5,2"/>
<line x1="1327.5" y1="432.1" x2="1327.5" y2="866.9" stroke="#9a9a9a" stroke-width="1" stroke-dasharray="3.5,2"/>
<line x1="1522.5" y1="184.3" x2="1522.5" y2="404.7" stroke="#9a9a9a" stroke-width="1" stroke-dasharray="3.5,2"/>
<line x1="1522.5" y1="432.1" x2="1522.5" y2="866.9" stroke="#9a9a9a" stroke-width="1" stroke-dasharray="3.5,2"/>
<line x1="1717.5" y1="184.3" x2="1717.5" y2="404.7" stroke="#9a9a9a" stroke-width="1" stroke-dasharray="3.5,2"/>
<line x1="1717.5" y1="432.1" x2="1717.5" y2="866.9" stroke="#9a9a9a" stroke-width="1" stroke-dasharray="3.5,2"/>
<line x1="1399.5" y1="184.3" x2="1399.5" y2="401.7" stroke="#9aa0b8" stroke-width="1.3" stroke-dasharray="4,2"/>
<line x1="1399.5" y1="432.1" x2="1399.5" y2="649.0" stroke="#9aa0b8" stroke-width="1.3" stroke-dasharray="4,2"/>
<line x1="573.3" y1="184.3" x2="573.3" y2="401.7" stroke="#6e7079" stroke-width="1.2"/>
<line x1="573.3" y1="432.1" x2="573.3" y2="649.0" stroke="#6e7079" stroke-width="1.2"/>
<line x1="568.3" y1="184.3" x2="573.3" y2="184.3" stroke="#6e7079" stroke-width="1"/>
<line x1="568.3" y1="432.1" x2="573.3" y2="432.1" stroke="#6e7079" stroke-width="1"/>
<line x1="568.3" y1="227.8" x2="573.3" y2="227.8" stroke="#6e7079" stroke-width="1"/>
<line x1="568.3" y1="475.5" x2="573.3" y2="475.5" stroke="#6e7079" stroke-width="1"/>
<line x1="568.3" y1="271.3" x2="573.3" y2="271.3" stroke="#6e7079" stroke-width="1"/>
<line x1="568.3" y1="518.9" x2="573.3" y2="518.9" stroke="#6e7079" stroke-width="1"/>
<line x1="568.3" y1="314.7" x2="573.3" y2="314.7" stroke="#6e7079" stroke-width="1"/>
<line x1="568.3" y1="562.2" x2="573.3" y2="562.2" stroke="#6e7079" stroke-width="1"/>
<line x1="568.3" y1="358.2" x2="573.3" y2="358.2" stroke="#6e7079" stroke-width="1"/>
<line x1="568.3" y1="605.6" x2="573.3" y2="605.6" stroke="#6e7079" stroke-width="1"/>
<line x1="568.3" y1="401.7" x2="573.3" y2="401.7" stroke="#6e7079" stroke-width="1"/>
<line x1="568.3" y1="649.0" x2="573.3" y2="649.0" stroke="#6e7079" stroke-width="1"/>
<line x1="645.3" y1="184.3" x2="645.3" y2="401.7" stroke="#6e7079" stroke-width="1.2"/>
<line x1="645.3" y1="432.1" x2="645.3" y2="649.0" stroke="#6e7079" stroke-width="1.2"/>
<line x1="640.3" y1="184.3" x2="645.3" y2="184.3" stroke="#6e7079" stroke-width="1"/>
<line x1="640.3" y1="432.1" x2="645.3" y2="432.1" stroke="#6e7079" stroke-width="1"/>
<line x1="640.3" y1="227.8" x2="645.3" y2="227.8" stroke="#6e7079" stroke-width="1"/>
<line x1="640.3" y1="475.5" x2="645.3" y2="475.5" stroke="#6e7079" stroke-width="1"/>
<line x1="640.3" y1="271.3" x2="645.3" y2="271.3" stroke="#6e7079" stroke-width="1"/>
<line x1="640.3" y1="518.9" x2="645.3" y2="518.9" stroke="#6e7079" stroke-width="1"/>
<line x1="640.3" y1="314.7" x2="645.3" y2="314.7" stroke="#6e7079" stroke-width="1"/>
<line x1="640.3" y1="562.2" x2="645.3" y2="562.2" stroke="#6e7079" stroke-width="1"/>
<line x1="640.3" y1="358.2" x2="645.3" y2="358.2" stroke="#6e7079" stroke-width="1"/>
<line x1="640.3" y1="605.6" x2="645.3" y2="605.6" stroke="#6e7079" stroke-width="1"/>
<line x1="640.3" y1="401.7" x2="645.3" y2="401.7" stroke="#6e7079" stroke-width="1"/>
<line x1="640.3" y1="649.0" x2="645.3" y2="649.0" stroke="#6e7079" stroke-width="1"/>
<line x1="1814.8" y1="184.3" x2="1814.8" y2="401.7" stroke="#6e7079" stroke-width="1.2"/>
<line x1="1814.8" y1="432.1" x2="1814.8" y2="649.0" stroke="#6e7079" stroke-width="1.2"/>
<line x1="1814.8" y1="184.3" x2="1819.8" y2="184.3" stroke="#6e7079" stroke-width="1"/>
<line x1="1814.8" y1="432.1" x2="1819.8" y2="432.1" stroke="#6e7079" stroke-width="1"/>
<line x1="1814.8" y1="227.8" x2="1819.8" y2="227.8" stroke="#6e7079" stroke-width="1"/>
<line x1="1814.8" y1="475.5" x2="1819.8" y2="475.5" stroke="#6e7079" stroke-width="1"/>
<line x1="1814.8" y1="271.3" x2="1819.8" y2="271.3" stroke="#6e7079" stroke-width="1"/>
<line x1="1814.8" y1="518.9" x2="1819.8" y2="518.9" stroke="#6e7079" stroke-width="1"/>
<line x1="1814.8" y1="314.7" x2="1819.8" y2="314.7" stroke="#6e7079" stroke-width="1"/>
<line x1="1814.8" y1="562.2" x2="1819.8" y2="562.2" stroke="#6e7079" stroke-width="1"/>
<line x1="1814.8" y1="358.2" x2="1819.8" y2="358.2" stroke="#6e7079" stroke-width="1"/>
<line x1="1814.8" y1="605.6" x2="1819.8" y2="605.6" stroke="#6e7079" stroke-width="1"/>
<line x1="1814.8" y1="401.7" x2="1819.8" y2="401.7" stroke="#6e7079" stroke-width="1"/>
<line x1="1814.8" y1="649.0" x2="1819.8" y2="649.0" stroke="#6e7079" stroke-width="1"/>
<line x1="645.7" y1="649.6" x2="645.7" y2="866.9" stroke="#6e7079" stroke-width="1.2"/>
<line x1="640" y1="866.9" x2="1814.8" y2="866.9" stroke="#6e7079" stroke-width="1.2"/>
<line x1="640.5" y1="649.6" x2="645.7" y2="649.6" stroke="#6e7079" stroke-width="1"/>
<line x1="640.5" y1="704.2" x2="645.7" y2="704.2" stroke="#6e7079" stroke-width="1"/>
<line x1="640.5" y1="757.9" x2="645.7" y2="757.9" stroke="#6e7079" stroke-width="1"/>
<line x1="640.5" y1="812.1" x2="645.7" y2="812.1" stroke="#6e7079" stroke-width="1"/>
<polyline points="644.8,272.4 647.2,271.4 649.7,272.5 652.1,271.8 654.5,271.5 657.0,271.6 659.4,271.9 661.8,272.3 664.3,272.0 666.7,271.8 669.2,269.3 671.6,261.6 674.0,261.2 676.5,260.2 678.9,260.9 681.3,260.4 683.8,261.1 686.2,260.8 688.6,260.9 691.1,259.9 693.5,261.0 695.9,260.3 698.4,260.9 700.8,261.1 703.3,260.0 705.7,259.8 708.1,261.0 710.6,261.3 713.0,261.2 715.4,260.4 717.9,261.1 720.3,259.8 722.7,259.8 725.2,260.7 727.6,260.6 730.0,261.0 732.5,260.1 734.9,260.5 737.4,261.3 739.8,260.2 742.2,260.4 744.7,260.7 747.1,261.3 749.5,260.0 752.0,260.8 754.4,260.3 756.8,260.3 759.3,260.1 761.7,260.4 764.1,260.6 766.6,260.3 769.0,260.5 771.5,260.7 773.9,261.0 776.3,260.6 778.8,260.3 781.2,261.2 783.6,259.9 786.1,259.7 788.5,261.1 790.9,260.1 793.4,259.9 795.8,260.2 798.2,260.2 800.7,260.2 803.1,261.0 805.6,260.1 808.0,259.8 810.4,260.0 812.9,261.1 815.3,260.3 817.7,260.2 820.2,260.8 822.6,261.1 825.0,260.4 827.5,260.9 829.9,260.0 832.3,260.1 834.8,260.5 837.2,260.0 839.7,260.0 842.1,259.9 844.5,260.0 847.0,260.9 849.4,260.8 851.8,259.7 854.3,260.1 856.7,260.7 859.1,260.9 861.6,260.4 864.0,260.7 866.4,259.9 868.9,260.8 871.3,260.8 873.8,260.2 876.2,259.9 878.6,259.6 881.1,260.5 883.5,260.5 885.9,259.5 888.4,260.3 890.8,261.0 893.2,259.5 895.7,259.7 898.1,259.6 900.5,260.2 903.0,260.1 905.4,260.9 907.9,259.6 910.3,259.8 912.7,261.0 915.2,259.5 917.6,259.9 920.0,260.1 922.5,259.5 924.9,259.9 927.3,260.4 929.8,260.4 932.2,260.4 934.6,260.5 937.1,260.4 939.5,259.5 942.0,260.5 944.4,260.4 946.8,259.8 949.3,260.1 951.7,259.8 954.1,260.8 956.6,259.9 959.0,259.7 961.4,260.7 963.9,260.6 966.3,248.6 968.7,247.3 971.2,246.9 973.6,246.9 976.1,247.1 978.5,247.1 980.9,247.7 983.4,246.6 985.8,247.4 988.2,246.2 990.7,246.4 993.1,247.6 995.5,246.5 998.0,246.9 1000.4,247.6 1002.8,247.2 1005.3,246.9 1007.7,247.2 1010.2,247.6 1012.6,247.6 1015.0,246.4 1017.5,246.3 1019.9,246.5 1022.3,246.3 1024.8,247.3 1027.2,247.4 1029.6,246.3 1032.1,246.1 1034.5,246.5 1036.9,247.1 1039.4,247.2 1041.8,246.7 1044.3,247.0 1046.7,247.5 1049.1,247.4 1051.6,246.2 1054.0,247.1 1056.4,247.2 1058.9,247.4 1061.3,246.6 1063.7,246.2 1066.2,246.7 1068.6,246.5 1071.0,246.6 1073.5,247.2 1075.9,247.0 1078.4,247.0 1080.8,246.9 1083.2,246.1 1085.7,246.0 1088.1,246.5 1090.5,247.2 1093.0,246.9 1095.4,247.1 1097.8,246.8 1100.3,247.1 1102.7,247.4 1105.1,247.0 1107.6,247.2 1110.0,247.4 1112.5,247.0 1114.9,247.1 1117.3,245.9 1119.8,245.8 1122.2,247.3 1124.6,246.2 1127.1,246.3 1129.5,246.0 1131.9,246.8 1134.4,245.8 1136.8,247.0 1139.2,246.2 1141.7,246.9 1144.1,247.2 1146.6,246.8 1149.0,246.4 1151.4,246.7 1153.9,247.1 1156.3,246.8 1158.7,246.1 1161.2,245.7 1163.6,247.1 1166.0,246.7 1168.5,245.8 1170.9,246.5 1173.3,246.6 1175.8,246.1 1178.2,247.1 1180.7,246.0 1183.1,245.9 1185.5,246.1 1188.0,246.2 1190.4,247.0 1192.8,246.6 1195.3,245.8 1197.7,246.2 1200.1,245.7 1202.6,246.7 1205.0,246.9 1207.4,245.7 1209.9,246.4 1212.3,245.9 1214.8,246.0 1217.2,246.7 1219.6,247.1 1222.1,246.0 1224.5,246.4 1226.9,246.0 1229.0,246.3 1232.0,266.0 1247.0,266.5 1251.0,278.4 1256.0,277.5 1261.0,266.2 1263.5,266.7 1265.9,266.0 1268.3,266.6 1270.8,266.2 1273.2,266.1 1275.6,266.6 1278.1,266.0 1280.5,266.6 1283.0,266.1 1285.4,266.6 1287.8,266.5 1290.3,266.9 1292.7,266.1 1295.1,266.0 1297.6,267.0 1300.0,266.3 1302.4,266.1 1304.9,266.6 1307.3,265.8 1309.7,267.0 1312.2,266.6 1314.6,266.5 1317.1,265.9 1319.5,266.7 1321.9,266.9 1324.4,266.7 1326.8,266.9 1329.2,265.6 1331.7,266.6 1334.1,266.8 1336.5,266.2 1339.0,265.6 1341.4,266.3 1343.8,265.9 1346.3,265.5 1348.7,267.0 1351.2,266.8 1353.6,266.5 1356.0,266.7 1358.5,266.5 1360.9,266.2 1363.3,265.7 1365.8,265.9 1368.2,266.3 1370.6,266.4 1373.1,266.0 1375.5,265.7 1377.9,266.0 1380.4,265.8 1382.8,267.0 1385.3,265.8 1387.7,266.1 1390.1,266.4 1392.6,265.9 1395.0,266.3 1397.4,266.4 1399.9,265.6 1402.3,267.0 1404.7,266.4 1407.2,265.7 1409.6,267.1 1412.0,265.8 1414.5,266.7 1416.9,266.3 1419.4,265.9 1421.8,266.1 1424.2,266.3 1426.7,266.1 1429.1,265.9 1431.5,266.2 1434.0,266.2 1436.4,266.6 1438.8,265.9 1441.3,265.6 1443.7,266.9 1446.1,265.7 1448.6,266.6 1451.0,266.4 1453.5,267.1 1455.9,265.9 1458.3,267.0 1460.8,265.8 1463.2,265.8 1465.6,266.6 1468.1,265.8 1470.5,266.5 1472.9,266.6 1475.4,265.8 1477.8,266.8 1480.2,266.2 1482.7,267.1 1485.1,265.6 1487.6,265.7 1490.0,266.6 1492.4,266.0 1494.9,266.2 1497.3,267.0 1499.7,266.1 1502.2,265.7 1504.6,265.8 1507.0,266.5 1509.5,266.8 1511.9,266.8 1514.3,266.3 1516.8,266.0 1519.2,265.8 1521.7,262.0 1524.1,253.9 1526.5,255.0 1529.0,254.2 1531.4,253.8 1533.8,254.6 1536.3,254.3 1538.7,253.6 1541.1,255.1 1543.6,255.1 1546.0,254.0 1548.4,254.9 1550.9,254.3 1553.3,254.6 1555.8,254.6 1558.2,254.7 1560.6,254.3 1563.1,253.8 1565.5,254.8 1567.9,254.2 1570.4,254.2 1572.8,254.7 1575.2,254.6 1577.7,255.1 1580.1,254.1 1582.5,254.5 1585.0,253.7 1587.4,253.7 1589.9,253.9 1592.3,254.0 1594.7,254.2 1597.2,253.9 1599.6,255.0 1602.0,254.2 1604.5,254.1 1606.9,254.9 1609.3,254.8 1611.8,254.7 1614.2,254.9 1616.6,254.7 1619.1,254.0 1621.5,255.0 1624.0,253.5 1626.4,254.9 1628.8,254.1 1631.3,254.0 1633.7,254.2 1636.1,254.1 1638.6,254.8 1641.0,254.7 1643.4,254.6 1645.9,253.8 1648.3,254.1 1650.7,253.6 1653.2,254.6 1655.6,253.5 1658.8,252.5 1660.5,253.7 1662.9,254.8 1665.4,254.9 1667.8,253.9 1670.2,254.8 1672.7,253.7 1675.1,257.5 1677.5,268.8 1680.0,272.9 1682.4,273.2 1684.8,272.7 1687.3,272.5 1689.7,273.1 1692.2,273.4 1694.6,273.7 1697.0,272.7 1699.5,272.5 1701.9,272.3 1704.3,272.4 1706.8,272.2 1709.2,272.5 1711.6,273.3 1714.1,272.3 1716.5,273.1 1718.9,272.6 1721.4,272.4 1723.8,272.8 1726.3,272.8 1728.7,272.8 1731.1,272.2 1733.6,272.9 1736.0,273.5 1738.4,272.0 1740.9,272.1 1743.3,272.9 1745.7,272.5 1748.2,272.4 1750.6,273.6 1753.0,272.5 1755.5,273.4 1757.9,272.9 1760.4,272.0 1762.8,272.4 1765.2,272.1 1767.7,272.8 1770.1,273.4 1772.5,272.0 1775.0,272.0 1777.4,272.0 1779.8,272.3 1782.3,272.2 1784.7,273.4 1787.1,273.1 1789.6,273.4 1792.0,272.8 1794.5,273.2 1796.9,273.0 1799.3,272.3 1801.8,272.9 1804.2,272.3 1806.6,272.6 1809.1,273.1 1811.5,272.2" fill="none" stroke="#6ab46c" stroke-width="1.9" stroke-linejoin="round"/>
<polyline points="644.8,256.9 647.2,259.5 649.7,260.2 652.1,256.2 654.5,257.0 657.0,262.5 659.4,256.5 661.8,256.9 664.3,262.7 666.7,260.4 669.2,256.7 671.6,253.7 674.0,250.9 676.5,244.9 678.9,243.9 681.3,248.6 683.8,247.8 686.2,246.6 688.6,248.8 691.1,246.9 693.5,250.0 695.9,244.4 698.4,247.0 700.8,246.5 703.3,245.5 705.7,247.3 708.1,244.7 710.6,248.8 713.0,249.3 715.4,243.9 717.9,246.4 720.3,245.0 722.7,243.6 725.2,249.6 727.6,246.2 730.0,244.1 732.5,248.0 734.9,244.5 737.4,249.7 739.8,244.6 742.2,243.3 744.7,244.5 747.1,245.6 749.5,246.5 752.0,249.8 754.4,248.3 756.8,245.6 759.3,243.2 761.7,244.3 764.1,250.6 766.6,246.5 769.0,248.3 771.5,243.5 773.9,243.3 776.3,249.5 778.8,247.6 781.2,245.4 783.6,245.5 786.1,243.8 788.5,244.4 790.9,243.3 793.4,249.5 795.8,246.7 798.2,244.1 800.7,248.8 803.1,244.6 805.6,243.6 808.0,247.8 810.4,250.1 812.9,243.4 815.3,249.4 817.7,244.6 820.2,243.9 822.6,243.3 825.0,245.5 827.5,248.9 829.9,247.0 832.3,249.9 834.8,244.9 837.2,245.7 839.7,245.2 842.1,250.9 844.5,250.6 847.0,245.9 849.4,246.7 851.8,245.7 854.3,249.1 856.7,243.5 859.1,243.8 861.6,246.4 864.0,245.2 866.4,250.0 868.9,249.2 871.3,247.6 873.8,248.6 876.2,248.8 878.6,249.5 881.1,250.7 883.5,244.5 885.9,248.3 888.4,244.4 890.8,246.9 893.2,249.6 895.7,250.5 898.1,249.5 900.5,243.6 903.0,246.2 905.4,244.6 907.9,251.5 910.3,244.5 912.7,245.3 915.2,246.2 917.6,243.8 920.0,250.5 922.5,248.6 924.9,244.6 927.3,247.4 929.8,244.0 932.2,248.4 934.6,245.3 937.1,243.7 939.5,244.3 942.0,248.0 944.4,248.7 946.8,246.1 949.3,248.7 951.7,246.3 954.1,244.5 956.6,246.0 959.0,246.7 961.4,251.1 963.9,244.4 966.3,237.4 968.7,235.0 971.2,238.4 973.6,237.9 976.1,236.1 978.5,230.9 980.9,237.0 983.4,236.0 985.8,231.5 988.2,234.1 990.7,230.7 993.1,236.9 995.5,236.2 998.0,236.9 1000.4,236.5 1002.8,232.5 1005.3,236.7 1007.7,232.3 1010.2,231.4 1012.6,233.4 1015.0,234.3 1017.5,232.6 1019.9,235.2 1022.3,235.1 1024.8,232.2 1027.2,235.3 1029.6,233.1 1032.1,236.1 1034.5,232.6 1036.9,236.6 1039.4,233.6 1041.8,234.6 1044.3,235.6 1046.7,234.3 1049.1,232.3 1051.6,238.0 1054.0,231.0 1056.4,232.8 1058.9,234.5 1061.3,230.5 1063.7,231.4 1066.2,236.5 1068.6,236.3 1071.0,235.2 1073.5,237.2 1075.9,236.1 1078.4,232.5 1080.8,235.2 1083.2,232.8 1085.7,236.0 1088.1,233.2 1090.5,231.4 1093.0,236.9 1095.4,235.5 1097.8,235.9 1100.3,234.4 1102.7,236.1 1105.1,233.6 1107.6,234.5 1110.0,230.6 1112.5,234.4 1114.9,236.3 1117.3,235.5 1119.8,236.2 1122.2,233.9 1124.6,236.7 1127.1,231.0 1129.5,236.7 1131.9,232.9 1134.4,230.8 1136.8,234.7 1139.2,233.5 1141.7,233.3 1144.1,236.4 1146.6,231.1 1149.0,234.7 1151.4,233.2 1153.9,234.0 1156.3,233.8 1158.7,231.1 1161.2,233.8 1163.6,236.4 1166.0,231.3 1168.5,230.2 1170.9,230.6 1173.4,226.6 1175.8,237.1 1178.2,230.4 1180.7,237.2 1183.1,233.9 1185.5,230.9 1188.0,233.1 1190.4,231.5 1192.8,235.2 1195.3,233.9 1197.7,232.1 1200.1,231.9 1202.6,236.2 1205.0,235.5 1207.4,233.1 1209.9,232.9 1212.3,235.2 1214.8,236.9 1217.2,230.6 1219.6,231.1 1222.1,232.6 1224.5,233.6 1226.9,230.6 1229.5,230.5 1232.0,241.9 1234.5,255.0 1240.0,250.7 1243.0,256.2 1245.5,255.0 1248.0,260.0 1251.5,244.0 1256.0,244.6 1258.0,302.8 1260.5,266.6 1263.5,255.0 1265.9,254.8 1268.3,254.1 1270.8,255.6 1273.2,253.8 1275.6,255.9 1278.1,256.4 1280.5,256.8 1283.0,255.1 1285.4,254.0 1287.8,256.8 1290.3,256.7 1292.7,257.0 1295.1,255.7 1297.6,256.0 1300.0,254.9 1302.4,254.2 1304.9,254.6 1307.3,256.1 1309.7,254.7 1312.2,256.0 1314.6,255.4 1317.1,255.2 1319.5,257.0 1321.9,254.2 1324.4,255.3 1326.8,254.2 1329.2,256.9 1331.7,255.3 1334.1,254.8 1336.5,254.2 1339.0,255.7 1341.4,255.0 1343.8,254.1 1346.3,253.7 1348.7,255.0 1351.2,255.7 1353.6,255.5 1356.0,256.8 1358.5,256.9 1360.9,257.0 1363.3,256.5 1365.8,255.3 1368.2,255.5 1370.6,255.1 1373.1,255.1 1375.5,253.8 1377.9,256.5 1380.4,254.5 1382.8,253.8 1385.3,255.3 1387.7,256.2 1390.1,255.2 1392.6,255.0 1395.0,256.0 1397.4,254.3 1399.9,253.7 1402.3,255.8 1404.7,255.6 1407.2,256.7 1409.6,255.2 1412.0,256.5 1414.5,253.8 1416.9,253.8 1419.4,255.8 1421.8,254.5 1424.2,254.0 1426.7,254.2 1429.1,255.1 1431.5,254.9 1434.0,255.7 1436.4,256.8 1438.8,255.0 1441.3,254.4 1443.7,255.8 1446.1,253.8 1448.6,255.1 1451.0,254.9 1453.5,255.1 1455.9,254.0 1458.3,255.7 1460.8,256.0 1463.2,256.4 1465.6,257.1 1468.1,255.0 1470.5,256.1 1472.9,255.3 1475.4,254.6 1477.8,256.9 1480.2,256.4 1482.7,257.1 1485.1,256.7 1487.6,257.0 1490.0,254.3 1492.4,253.9 1494.9,254.5 1497.3,255.3 1499.7,256.2 1502.2,255.4 1504.6,255.6 1507.0,256.5 1509.5,254.1 1511.9,256.2 1514.3,254.0 1516.8,254.7 1519.2,256.4 1521.7,253.6 1524.1,243.3 1526.5,242.9 1529.0,244.7 1531.4,242.8 1533.8,242.0 1536.3,242.8 1538.7,242.0 1541.1,244.7 1543.6,242.3 1546.0,245.2 1548.4,242.7 1550.9,243.0 1553.3,243.9 1555.8,243.0 1558.2,243.2 1560.6,242.3 1563.1,243.3 1565.5,242.1 1567.9,242.7 1570.4,245.0 1572.8,242.9 1575.2,242.9 1577.7,244.3 1580.1,245.0 1582.5,243.0 1585.0,243.3 1587.4,244.4 1589.9,244.7 1592.3,244.1 1594.7,242.6 1597.2,242.6 1599.6,244.6 1602.0,244.4 1604.5,245.0 1606.9,244.6 1609.3,243.5 1611.8,242.5 1614.2,245.0 1616.6,244.4 1619.1,244.0 1621.5,244.3 1624.0,243.4 1626.4,243.2 1628.8,244.0 1631.3,243.7 1633.7,244.4 1636.1,245.2 1638.6,244.9 1641.0,243.4 1643.4,243.3 1645.9,245.2 1648.3,243.4 1650.7,244.8 1653.2,242.4 1655.6,243.6 1658.8,236.4 1660.5,244.8 1662.9,245.0 1665.4,242.6 1667.8,244.2 1670.2,244.2 1672.7,242.6 1675.1,250.8 1677.5,256.8 1680.0,265.0 1682.4,262.6 1684.8,263.7 1687.3,263.0 1689.7,264.1 1692.2,264.0 1694.6,263.6 1697.0,263.0 1699.5,263.6 1701.9,263.2 1704.3,264.9 1706.8,263.5 1709.2,263.5 1711.6,262.8 1714.1,262.8 1716.5,265.1 1718.9,263.0 1721.4,264.8 1723.8,263.9 1726.3,265.2 1728.7,262.5 1731.1,265.0 1733.6,264.5 1736.0,263.8 1738.4,264.3 1740.9,264.3 1743.3,263.4 1745.7,264.0 1748.2,262.7 1750.6,262.0 1753.0,264.2 1755.5,263.5 1757.9,264.9 1760.4,262.8 1762.8,264.6 1765.2,265.2 1767.7,264.9 1770.1,265.1 1772.5,262.5 1775.0,262.5 1777.4,262.7 1779.8,263.2 1782.3,262.4 1784.7,262.5 1787.1,262.1 1789.6,265.0 1792.0,263.2 1794.5,264.0 1796.9,263.5 1799.3,264.4 1801.8,264.6 1804.2,263.2 1806.6,263.7 1809.1,262.3 1811.5,262.9" fill="none" stroke="#ff0000" stroke-width="1.9" stroke-linejoin="round"/>
<polyline points="644.8,564.6 647.2,567.6 649.7,565.7 652.1,565.5 654.5,568.4 657.0,565.4 659.4,565.4 661.8,566.4 664.3,566.5 666.7,565.4 669.2,568.5 671.6,566.7 674.0,565.8 676.5,567.9 678.9,565.9 681.3,566.7 683.8,569.2 686.2,567.0 688.6,567.3 691.1,566.7 693.5,567.5 695.9,565.7 698.4,567.2 700.8,566.4 703.3,567.5 705.7,566.6 708.1,565.1 710.6,566.7 713.0,567.0 715.4,567.6 717.9,564.9 720.3,565.4 722.7,566.5 725.2,566.1 727.6,567.9 730.0,567.6 732.5,567.0 734.9,566.0 737.4,566.2 739.8,567.2 742.2,565.8 744.7,565.8 747.1,566.5 749.5,565.4 752.0,566.4 754.4,566.8 756.8,566.2 759.3,566.7 761.7,565.5 764.1,568.1 766.6,564.5 769.0,567.5 771.5,566.7 773.9,568.1 776.3,565.4 778.8,565.4 781.2,564.8 783.6,565.2 786.1,568.1 788.5,567.3 790.9,566.6 793.4,567.2 795.8,565.5 798.2,566.0 800.7,566.3 803.1,565.5 805.6,567.4 808.0,567.5 810.4,567.5 812.9,565.6 815.3,565.8 817.7,565.8 820.2,565.6 822.6,568.0 825.0,566.7 827.5,565.8 829.9,567.6 832.3,566.9 834.8,565.0 837.2,565.3 839.7,564.9 842.1,565.9 844.5,566.6 847.0,565.3 849.4,566.4 851.8,565.7 854.3,564.6 856.7,566.2 859.1,567.0 861.6,565.8 864.0,565.7 866.4,565.8 868.9,566.1 871.3,565.2 873.8,567.5 876.2,567.1 878.6,566.0 881.1,566.7 883.5,567.2 885.9,567.7 888.4,567.0 890.8,566.5 893.2,567.0 895.7,565.7 898.1,564.7 900.5,566.0 903.0,564.7 905.4,565.8 907.9,567.5 910.3,566.2 912.7,567.3 915.2,565.0 917.6,567.5 920.0,564.3 922.5,565.2 924.9,567.9 927.3,564.9 929.8,564.6 932.2,566.9 934.6,565.3 937.1,568.4 939.5,565.5 942.0,568.0 944.4,565.9 946.8,567.8 949.3,568.2 951.7,565.6 954.1,563.6 956.6,566.8 959.0,565.2 961.4,565.6 963.9,565.8 966.0,557.9 968.7,563.6 971.2,566.3 973.6,564.5 976.1,565.3 978.5,566.7 980.9,563.3 983.4,563.4 985.8,566.2 988.2,563.5 990.7,565.1 993.1,565.1 995.5,563.9 998.0,565.1 1000.4,565.4 1002.8,563.3 1005.3,564.0 1007.7,564.3 1010.2,566.7 1012.6,567.1 1015.0,563.9 1017.5,566.2 1019.9,564.8 1022.3,566.5 1024.8,565.4 1027.2,566.2 1029.6,563.3 1032.1,566.3 1034.5,565.4 1036.9,565.1 1039.4,564.1 1041.8,567.0 1044.3,565.2 1046.7,565.1 1049.1,564.4 1051.6,565.0 1054.0,565.8 1056.4,564.7 1058.9,565.4 1061.3,565.1 1063.7,565.5 1066.2,566.1 1068.6,565.0 1071.0,565.3 1073.5,562.7 1075.9,565.7 1078.4,564.7 1080.8,564.1 1083.2,567.6 1085.7,567.1 1088.1,566.4 1090.5,565.6 1093.0,562.7 1095.4,564.8 1097.8,563.7 1100.3,565.8 1102.7,567.4 1105.1,568.0 1107.6,564.5 1110.0,565.1 1112.5,566.3 1114.9,563.8 1117.3,566.6 1119.8,564.2 1122.2,563.6 1124.6,566.4 1127.1,566.3 1129.5,564.2 1131.9,566.5 1134.4,564.7 1136.8,566.5 1139.2,564.1 1141.7,564.9 1144.1,565.9 1146.6,566.4 1149.0,565.4 1151.4,567.3 1153.9,565.8 1156.3,565.8 1158.7,564.6 1161.2,566.8 1163.6,563.2 1166.0,565.3 1168.5,566.3 1170.9,563.7 1173.8,570.2 1175.8,565.7 1178.2,566.4 1180.7,565.5 1183.1,565.8 1185.5,565.9 1188.0,563.9 1190.4,564.5 1192.8,565.0 1195.3,564.7 1197.7,565.0 1200.1,564.7 1202.6,564.2 1205.0,565.9 1207.4,565.2 1209.9,562.4 1212.3,564.7 1214.8,565.6 1217.2,562.9 1219.6,565.0 1222.1,566.0 1224.5,564.5 1226.9,566.5 1228.0,565.0 1232.0,572.2 1236.0,565.5 1248.0,564.3 1255.0,569.6 1258.0,533.6 1261.0,565.2 1265.9,565.3 1268.3,565.1 1270.8,565.0 1273.2,565.4 1275.6,565.0 1278.1,564.9 1280.5,565.8 1283.0,564.7 1285.4,565.3 1287.8,565.7 1290.3,565.7 1292.7,564.4 1295.1,565.0 1297.6,566.3 1300.0,565.4 1302.4,565.4 1304.9,565.5 1307.3,565.6 1309.7,566.1 1312.2,564.9 1314.6,565.9 1317.1,565.6 1319.5,565.6 1321.9,565.9 1324.4,565.1 1326.8,565.4 1329.2,565.7 1331.7,565.9 1334.1,565.5 1336.5,564.9 1339.0,565.3 1341.4,565.2 1343.8,565.7 1346.3,565.5 1348.7,565.3 1351.2,566.3 1353.6,564.6 1356.0,565.8 1358.5,565.7 1360.9,564.9 1363.3,565.3 1365.8,565.5 1368.2,565.8 1370.6,566.3 1373.1,565.4 1375.5,565.1 1377.9,566.0 1380.4,564.9 1382.8,565.8 1385.3,565.8 1387.7,565.2 1390.1,565.5 1392.6,565.1 1395.0,566.0 1397.4,565.9 1399.9,566.5 1402.3,565.9 1404.7,565.9 1407.2,566.2 1409.6,565.2 1412.0,565.7 1414.5,566.4 1416.9,564.5 1419.4,566.0 1421.8,566.0 1424.2,565.1 1426.7,564.9 1429.1,566.0 1431.5,566.2 1434.0,565.8 1436.4,565.1 1438.8,565.7 1441.3,565.8 1443.7,565.6 1446.1,565.0 1448.6,566.0 1451.0,565.7 1453.5,566.1 1455.9,564.6 1458.3,564.8 1460.8,565.1 1463.2,565.6 1465.6,565.3 1468.1,566.3 1470.5,565.2 1472.9,565.9 1475.4,566.1 1477.8,566.0 1480.2,565.6 1482.7,565.4 1485.1,565.1 1487.6,565.2 1490.0,565.9 1492.4,565.3 1494.9,565.7 1497.3,565.0 1499.7,565.9 1502.2,566.6 1504.6,565.7 1507.0,564.5 1509.5,565.4 1511.9,565.4 1514.3,565.2 1516.8,565.4 1519.2,565.1 1522.0,559.5 1524.1,565.3 1526.5,565.3 1529.0,565.7 1531.4,566.2 1533.8,565.3 1536.3,565.1 1538.7,565.2 1541.1,565.2 1543.6,565.4 1546.0,564.4 1548.4,565.5 1550.9,565.1 1553.3,564.7 1555.8,565.6 1558.2,565.5 1560.6,565.2 1563.1,564.9 1565.5,565.2 1567.9,565.2 1570.4,565.5 1572.8,565.9 1575.2,565.0 1577.7,565.8 1580.1,566.3 1582.5,565.5 1585.0,566.1 1587.4,566.0 1589.9,565.6 1592.3,566.0 1594.7,565.1 1597.2,566.2 1599.6,565.5 1602.0,565.3 1604.5,564.9 1606.9,564.9 1609.3,565.4 1611.8,565.3 1614.2,565.4 1616.6,564.9 1619.1,565.8 1621.5,565.1 1624.0,565.6 1626.4,565.4 1628.8,565.5 1631.3,564.7 1633.7,565.9 1636.1,565.4 1638.6,565.3 1641.0,565.3 1643.4,565.4 1645.9,565.3 1648.3,565.0 1650.7,566.1 1653.2,565.4 1655.6,566.2 1658.6,568.9 1660.5,566.2 1662.9,566.1 1665.4,565.5 1667.8,564.8 1670.2,565.3 1672.7,565.6 1675.1,564.8 1678.3,573.3 1680.0,566.3 1682.4,565.8 1684.8,565.8 1687.3,565.0 1689.7,564.5 1692.2,566.3 1694.6,564.5 1697.0,565.0 1699.5,565.1 1701.9,565.3 1704.3,564.4 1706.8,565.4 1709.2,565.7 1711.6,565.6 1714.1,566.2 1716.5,565.3 1718.9,565.8 1721.4,565.4 1723.8,565.4 1726.3,566.1 1728.7,565.0 1731.1,565.9 1733.6,565.3 1736.0,566.2 1738.4,565.3 1740.9,566.0 1743.3,565.6 1745.7,565.8 1748.2,566.6 1750.6,565.9 1753.0,565.5 1755.5,565.5 1757.9,566.4 1760.4,566.6 1762.8,566.1 1765.2,565.7 1767.7,565.8 1770.1,566.1 1772.5,565.2 1775.0,565.2 1777.4,565.4 1779.8,566.0 1782.3,565.5 1784.7,565.6 1787.1,566.2 1789.6,565.3 1792.0,565.7 1794.5,565.8 1796.9,565.0 1799.3,565.1 1801.8,565.3 1804.2,565.2 1806.6,565.2 1809.1,566.2 1811.5,565.6" fill="none" stroke="#1e9bff" stroke-width="1.9" stroke-linejoin="round"/>
<polyline points="644.8,527.2 647.2,532.3 649.7,529.3 652.1,528.7 654.5,532.8 657.0,528.5 659.4,528.9 661.8,530.0 664.3,531.3 666.7,529.1 669.2,533.8 671.6,531.0 674.0,528.8 676.5,533.0 678.9,528.4 681.3,530.5 683.8,534.1 686.2,529.9 688.6,532.0 691.1,530.1 693.5,532.8 695.9,529.3 698.4,531.2 700.8,530.4 703.3,531.4 705.7,531.1 708.1,528.3 710.6,530.6 713.0,530.7 715.4,531.6 717.9,529.0 720.3,529.4 722.7,531.3 725.2,529.3 727.6,531.6 730.0,532.3 732.5,532.2 734.9,530.0 737.4,530.0 739.8,531.9 742.2,528.5 744.7,529.0 747.1,529.8 749.5,529.0 752.0,530.8 754.4,530.9 756.8,529.9 759.3,531.1 761.7,529.6 764.1,531.6 766.6,528.2 769.0,531.4 771.5,529.9 773.9,532.5 776.3,529.9 778.8,528.7 781.2,527.8 783.6,528.4 786.1,533.2 788.5,532.4 790.9,530.3 793.4,531.1 795.8,528.7 798.2,530.1 800.7,530.8 803.1,528.9 805.6,531.8 808.0,532.2 810.4,531.5 812.9,529.2 815.3,528.9 817.7,529.8 820.2,528.3 822.6,532.3 825.0,531.4 827.5,530.6 829.9,533.0 832.3,530.8 834.8,528.7 837.2,528.2 839.7,529.0 842.1,530.6 844.5,530.8 847.0,528.9 849.4,530.8 851.8,529.7 854.3,527.4 856.7,531.1 859.1,530.8 861.6,530.3 864.0,528.3 866.4,529.2 868.9,530.1 871.3,529.4 873.8,532.9 876.2,531.1 878.6,530.1 881.1,531.9 883.5,532.5 885.9,531.9 888.4,531.0 890.8,530.5 893.2,531.0 895.7,530.4 898.1,527.1 900.5,530.0 903.0,527.9 905.4,529.0 907.9,532.6 910.3,531.3 912.7,532.2 915.2,528.9 917.6,532.7 920.0,527.6 922.5,529.1 924.9,532.8 927.3,528.6 929.8,528.2 932.2,531.6 934.6,528.5 937.1,533.0 939.5,529.8 942.0,532.9 944.4,529.2 946.8,533.0 949.3,533.2 951.7,529.3 954.1,526.6 956.6,530.5 959.0,528.3 961.4,530.2 963.9,529.6 966.0,518.7 968.7,527.2 971.2,530.6 973.6,527.9 976.1,529.3 978.5,531.3 980.9,527.0 983.4,526.4 985.8,529.9 988.2,525.8 990.7,529.7 993.1,529.1 995.5,526.5 998.0,529.4 1000.4,527.9 1002.8,527.4 1005.3,527.2 1007.7,527.8 1010.2,530.5 1012.6,531.8 1015.0,527.7 1017.5,530.3 1019.9,528.0 1022.3,530.1 1024.8,528.6 1027.2,530.9 1029.6,526.8 1032.1,529.8 1034.5,528.9 1036.9,529.0 1039.4,526.8 1041.8,531.2 1044.3,529.0 1046.7,528.7 1049.1,528.5 1051.6,528.1 1054.0,529.3 1056.4,529.2 1058.9,529.7 1061.3,527.5 1063.7,529.7 1066.2,529.9 1068.6,528.5 1071.0,527.7 1073.5,524.4 1075.9,529.1 1078.4,527.9 1080.8,526.1 1083.2,532.8 1085.7,531.6 1088.1,530.1 1090.5,528.6 1093.0,524.7 1095.4,527.3 1097.8,526.6 1100.3,529.0 1102.7,533.0 1105.1,532.2 1107.6,527.2 1110.0,528.5 1112.5,530.1 1114.9,526.8 1117.3,530.9 1119.8,526.1 1122.2,525.4 1124.6,530.5 1127.1,529.6 1129.5,527.7 1131.9,530.0 1134.4,526.4 1136.8,531.1 1139.2,527.4 1141.7,528.1 1144.1,529.6 1146.6,530.1 1149.0,527.8 1151.4,531.7 1153.9,529.2 1156.3,528.4 1158.7,527.6 1161.2,531.0 1163.6,525.9 1166.0,529.3 1168.5,530.9 1170.9,526.5 1173.8,535.4 1175.8,528.6 1178.2,530.1 1180.7,528.4 1183.1,528.6 1185.5,528.0 1188.0,525.3 1190.4,528.1 1192.8,527.5 1195.3,527.3 1197.7,528.7 1200.1,526.2 1202.6,526.4 1205.0,528.3 1207.4,527.2 1209.9,524.7 1212.3,527.1 1214.8,528.2 1217.2,524.5 1219.6,527.3 1222.1,530.3 1224.5,526.4 1226.9,529.1 1228.0,527.5 1232.0,538.9 1236.0,530.0 1240.0,528.5 1244.0,527.5 1248.0,525.7 1251.0,547.6 1255.0,548.5 1258.0,482.7 1260.0,527.5 1262.0,529.5 1265.9,529.1 1268.3,529.1 1270.8,529.0 1273.2,529.2 1275.6,528.6 1278.1,528.7 1280.5,529.7 1283.0,528.3 1285.4,529.4 1287.8,529.3 1290.3,529.7 1292.7,528.5 1295.1,528.6 1297.6,530.4 1300.0,529.1 1302.4,529.2 1304.9,529.6 1307.3,529.8 1309.7,530.2 1312.2,528.8 1314.6,530.1 1317.1,529.5 1319.5,529.9 1321.9,529.8 1324.4,528.6 1326.8,529.2 1329.2,529.8 1331.7,530.0 1334.1,529.6 1336.5,528.5 1339.0,529.4 1341.4,529.1 1343.8,529.3 1346.3,529.2 1348.7,529.0 1351.2,530.4 1353.6,528.1 1356.0,529.9 1358.5,529.3 1360.9,528.6 1363.3,529.0 1365.8,529.2 1368.2,529.4 1370.6,530.3 1373.1,529.0 1375.5,528.6 1377.9,529.8 1380.4,528.5 1382.8,529.7 1385.3,529.5 1387.7,529.2 1390.1,529.0 1392.6,528.6 1395.0,529.9 1397.4,530.0 1399.9,530.3 1402.3,529.9 1404.7,530.1 1407.2,530.0 1409.6,528.8 1412.0,529.5 1414.5,530.3 1416.9,528.0 1419.4,529.9 1421.8,529.7 1424.2,528.7 1426.7,528.6 1429.1,530.0 1431.5,530.0 1434.0,529.6 1436.4,528.5 1438.8,529.2 1441.3,529.6 1443.7,529.3 1446.1,528.7 1448.6,529.8 1451.0,529.4 1453.5,530.0 1455.9,528.2 1458.3,528.3 1460.8,528.7 1463.2,529.4 1465.6,528.8 1468.1,530.5 1470.5,529.2 1472.9,529.9 1475.4,529.7 1477.8,529.5 1480.2,529.2 1482.7,528.7 1485.1,528.7 1487.6,529.2 1490.0,529.6 1492.4,528.8 1494.9,529.2 1497.3,528.4 1499.7,529.7 1502.2,530.4 1504.6,529.7 1507.0,528.1 1509.5,529.2 1511.9,529.5 1514.3,528.7 1516.8,528.6 1519.2,528.8 1522.0,520.1 1524.1,529.2 1526.5,528.8 1529.0,529.6 1531.4,529.7 1533.8,529.1 1536.3,528.8 1538.7,528.7 1541.1,528.7 1543.6,528.8 1546.0,528.1 1548.4,529.0 1550.9,528.5 1553.3,527.9 1555.8,528.9 1558.2,528.9 1560.6,528.6 1563.1,528.2 1565.5,529.1 1567.9,529.2 1570.4,529.1 1572.8,529.7 1575.2,528.7 1577.7,529.0 1580.1,530.2 1582.5,529.4 1585.0,530.2 1587.4,529.4 1589.9,529.2 1592.3,529.8 1594.7,528.5 1597.2,530.1 1599.6,528.8 1602.0,528.8 1604.5,528.3 1606.9,528.8 1609.3,528.9 1611.8,528.9 1614.2,529.3 1616.6,528.3 1619.1,529.4 1621.5,528.8 1624.0,529.3 1626.4,528.9 1628.8,529.3 1631.3,528.0 1633.7,529.5 1636.1,529.2 1638.6,528.9 1641.0,528.8 1643.4,528.6 1645.9,528.7 1648.3,528.4 1650.7,529.7 1653.2,529.1 1655.6,529.6 1658.6,533.9 1660.5,529.9 1662.9,529.4 1665.4,529.0 1667.8,528.3 1670.2,528.5 1672.7,528.7 1675.1,528.3 1678.3,539.8 1680.0,530.4 1682.4,529.3 1684.8,529.4 1687.3,528.3 1689.7,527.8 1692.2,530.0 1694.6,527.8 1697.0,528.4 1699.5,528.5 1701.9,528.6 1704.3,527.9 1706.8,528.8 1709.2,529.1 1711.6,528.9 1714.1,529.9 1716.5,528.7 1718.9,529.2 1721.4,528.8 1723.8,528.7 1726.3,529.6 1728.7,528.4 1731.1,529.4 1733.6,528.6 1736.0,529.7 1738.4,529.1 1740.9,529.5 1743.3,528.8 1745.7,529.1 1748.2,530.1 1750.6,529.5 1753.0,529.0 1755.5,528.8 1757.9,529.9 1760.4,530.1 1762.8,529.6 1765.2,529.2 1767.7,529.2 1770.1,529.3 1772.5,528.5 1775.0,528.6 1777.4,528.4 1779.8,529.6 1782.3,528.7 1784.7,528.9 1787.1,529.9 1789.6,528.7 1792.0,529.1 1794.5,529.4 1796.9,528.1 1799.3,528.9 1801.8,528.6 1804.2,528.6 1806.6,528.8 1809.1,529.5 1811.5,529.5" fill="none" stroke="#b22d2d" stroke-width="1.9" stroke-linejoin="round"/>
<polyline points="644.8,460.9 647.2,453.1 649.7,457.8 652.1,457.9 654.5,450.4 657.0,458.6 659.4,460.0 661.8,456.3 664.3,455.3 666.7,458.1 669.2,450.5 671.6,455.8 674.0,459.0 676.5,451.5 678.9,458.8 681.3,454.2 683.8,448.8 686.2,455.2 688.6,452.4 691.1,456.6 693.5,451.8 695.9,459.0 698.4,453.2 700.8,456.7 703.3,453.7 705.7,454.6 708.1,459.4 710.6,456.3 713.0,454.3 715.4,451.6 717.9,459.3 720.3,458.0 722.7,454.6 725.2,456.4 727.6,452.4 730.0,452.4 732.5,453.0 734.9,456.8 737.4,456.6 739.8,453.3 742.2,458.0 744.7,458.1 747.1,456.2 749.5,458.9 752.0,454.8 754.4,455.3 756.8,457.2 759.3,455.6 761.7,458.2 764.1,451.8 766.6,460.2 769.0,453.3 771.5,455.2 773.9,451.4 776.3,457.6 778.8,459.7 781.2,459.0 783.6,458.3 786.1,450.9 788.5,453.3 790.9,454.3 793.4,452.8 795.8,459.2 798.2,456.3 800.7,455.7 803.1,457.3 805.6,452.8 808.0,453.0 810.4,453.1 812.9,457.3 815.3,456.8 817.7,457.5 820.2,459.1 822.6,451.6 825.0,454.1 827.5,456.2 829.9,451.7 832.3,454.2 834.8,458.9 837.2,459.1 839.7,459.1 842.1,455.9 844.5,455.2 847.0,459.1 849.4,454.7 851.8,456.8 854.3,459.8 856.7,454.7 859.1,454.0 861.6,455.8 864.0,457.6 866.4,457.3 868.9,456.3 871.3,457.5 873.8,451.1 876.2,453.3 878.6,456.4 881.1,453.1 883.5,451.9 885.9,452.3 888.4,453.2 890.8,455.4 893.2,452.9 895.7,456.6 898.1,460.9 900.5,455.5 903.0,459.7 905.4,456.8 907.9,452.6 910.3,455.2 912.7,453.1 915.2,458.2 917.6,452.6 920.0,459.8 922.5,457.6 924.9,450.1 927.3,458.2 929.8,460.5 932.2,453.7 934.6,458.8 937.1,450.8 939.5,456.7 942.0,451.2 944.4,457.4 946.8,450.8 949.3,449.2 951.7,457.1 954.1,462.6 956.6,454.3 959.0,458.4 961.4,456.5 963.9,455.5 966.0,473.0 968.7,461.5 971.2,453.5 973.6,458.6 976.1,458.0 978.5,453.0 980.9,461.5 983.4,462.5 985.8,454.3 988.2,461.9 990.7,457.2 993.1,456.5 995.5,461.2 998.0,457.6 1000.4,457.9 1002.8,461.2 1005.3,460.5 1007.7,459.5 1010.2,453.2 1012.6,452.7 1015.0,460.1 1017.5,454.5 1019.9,457.4 1022.3,454.1 1024.8,456.5 1027.2,453.5 1029.6,461.4 1032.1,454.3 1034.5,456.7 1036.9,456.5 1039.4,460.2 1041.8,453.2 1044.3,456.9 1046.7,456.4 1049.1,458.4 1051.6,458.2 1054.0,455.8 1056.4,457.6 1058.9,456.0 1061.3,458.2 1063.7,456.7 1066.2,455.3 1068.6,456.9 1071.0,457.9 1073.5,462.9 1075.9,455.7 1078.4,457.8 1080.8,460.8 1083.2,451.7 1085.7,452.5 1088.1,454.0 1090.5,456.7 1093.0,463.0 1095.4,458.0 1097.8,460.1 1100.3,456.4 1102.7,451.0 1105.1,451.2 1107.6,459.6 1110.0,457.5 1112.5,453.7 1114.9,459.8 1117.3,453.1 1119.8,459.8 1122.2,460.6 1124.6,455.1 1127.1,454.2 1129.5,459.1 1131.9,454.3 1134.4,459.2 1136.8,454.0 1139.2,459.0 1141.7,457.2 1144.1,455.9 1146.6,454.8 1149.0,457.6 1151.4,452.3 1153.9,456.3 1156.3,456.0 1158.7,458.7 1161.2,453.9 1163.6,461.2 1166.0,456.2 1168.5,454.2 1170.9,460.4 1173.8,446.7 1175.8,456.5 1178.2,454.8 1180.7,457.0 1183.1,455.3 1185.5,456.2 1188.0,460.8 1190.4,458.0 1192.8,457.4 1195.3,457.8 1197.7,456.9 1200.1,459.1 1202.6,459.1 1205.0,456.1 1207.4,457.3 1209.9,462.8 1212.3,458.0 1214.8,456.5 1217.2,462.0 1219.6,457.0 1222.1,454.3 1224.5,458.6 1226.9,454.9 1228.0,452.8 1230.0,460.7 1232.0,438.8 1235.0,458.0 1240.0,452.0 1244.0,455.0 1248.0,461.6 1252.0,448.4 1256.0,447.6 1258.5,482.5 1261.0,461.6 1264.0,456.5 1265.9,457.0 1268.3,457.2 1270.8,457.5 1273.2,456.6 1275.6,457.7 1278.1,457.9 1280.5,455.5 1283.0,457.9 1285.4,456.7 1287.8,456.0 1290.3,456.2 1292.7,458.4 1295.1,457.5 1297.6,454.7 1300.0,456.6 1302.4,456.4 1304.9,456.3 1307.3,456.0 1309.7,455.1 1312.2,457.4 1314.6,455.6 1317.1,456.2 1319.5,455.9 1321.9,455.8 1324.4,457.3 1326.8,456.9 1329.2,455.9 1331.7,455.6 1334.1,456.1 1336.5,457.5 1339.0,456.7 1341.4,456.8 1343.8,456.2 1346.3,456.3 1348.7,456.8 1351.2,454.7 1353.6,458.1 1356.0,455.8 1358.5,456.0 1360.9,457.9 1363.3,456.8 1365.8,456.6 1368.2,456.0 1370.6,455.0 1373.1,456.7 1375.5,457.7 1377.9,455.7 1380.4,457.9 1382.8,455.4 1385.3,455.8 1387.7,457.1 1390.1,456.6 1392.6,457.3 1395.0,455.8 1397.4,455.6 1399.9,454.7 1402.3,455.4 1404.7,455.5 1407.2,455.2 1409.6,456.9 1412.0,455.9 1414.5,454.6 1416.9,458.9 1419.4,455.8 1421.8,455.3 1424.2,457.8 1426.7,457.7 1429.1,455.5 1431.5,455.1 1434.0,455.6 1436.4,457.7 1438.8,456.3 1441.3,455.8 1443.7,456.6 1446.1,457.8 1448.6,455.2 1451.0,456.2 1453.5,455.2 1455.9,458.8 1458.3,458.4 1460.8,457.5 1463.2,456.5 1465.6,457.3 1468.1,454.5 1470.5,456.9 1472.9,455.3 1475.4,455.3 1477.8,455.9 1480.2,456.3 1482.7,457.2 1485.1,457.3 1487.6,456.9 1490.0,455.7 1492.4,457.3 1494.9,456.5 1497.3,457.8 1499.7,455.7 1502.2,454.3 1504.6,456.2 1507.0,458.8 1509.5,457.1 1511.9,456.4 1514.3,457.5 1516.8,457.1 1519.2,457.1 1522.0,470.0 1524.1,456.7 1526.5,456.8 1529.0,456.0 1531.4,455.5 1533.8,456.8 1536.3,457.6 1538.7,457.3 1541.1,457.1 1543.6,457.2 1546.0,459.0 1548.4,456.9 1550.9,457.7 1553.3,458.6 1555.8,456.7 1558.2,456.9 1560.6,457.7 1563.1,458.3 1565.5,457.0 1567.9,457.0 1570.4,456.8 1572.8,455.5 1575.2,457.8 1577.7,456.4 1580.1,455.0 1582.5,456.5 1585.0,455.0 1587.4,455.7 1589.9,456.7 1592.3,455.8 1594.7,457.7 1597.2,455.2 1599.6,457.0 1602.0,457.2 1604.5,458.1 1606.9,457.6 1609.3,456.9 1611.8,456.8 1614.2,456.6 1616.6,457.8 1619.1,456.1 1621.5,457.2 1624.0,456.6 1626.4,456.9 1628.8,456.4 1631.3,458.8 1633.7,456.1 1636.1,457.0 1638.6,457.0 1641.0,457.3 1643.4,457.2 1645.9,457.1 1648.3,457.7 1650.7,455.2 1653.2,456.7 1655.6,455.5 1658.6,448.6 1660.5,455.6 1662.9,455.8 1665.4,456.7 1667.8,458.1 1670.2,457.3 1672.7,457.0 1675.1,458.1 1678.3,437.7 1680.0,454.7 1682.4,456.3 1684.8,456.5 1687.3,458.0 1689.7,458.9 1692.2,455.4 1694.6,459.1 1697.0,458.3 1699.5,457.6 1701.9,457.1 1704.3,459.1 1706.8,456.8 1709.2,456.3 1711.6,456.9 1714.1,455.4 1716.5,457.2 1718.9,456.7 1721.4,457.1 1723.8,457.1 1726.3,455.7 1728.7,458.1 1731.1,455.8 1733.6,457.7 1736.0,455.2 1738.4,457.1 1740.9,456.0 1743.3,456.8 1745.7,456.1 1748.2,454.6 1750.6,455.7 1753.0,456.9 1755.5,457.4 1757.9,455.3 1760.4,454.7 1762.8,455.9 1765.2,456.6 1767.7,456.2 1770.1,456.0 1772.5,457.6 1775.0,457.8 1777.4,457.5 1779.8,455.9 1782.3,456.9 1784.7,456.6 1787.1,455.4 1789.6,457.7 1792.0,456.9 1794.5,456.3 1796.9,458.2 1799.3,457.6 1801.8,457.7 1804.2,458.0 1806.6,457.5 1809.1,455.6 1811.5,456.4" fill="none" stroke="#3a1480" stroke-width="1.9" stroke-linejoin="round"/>
<circle cx="1399.5" cy="255.6" r="3.6" fill="#fff" stroke="#ff0000" stroke-width="1.8"/>
<circle cx="1399.5" cy="266.0" r="3.6" fill="#fff" stroke="#6ab46c" stroke-width="1.8"/>
<circle cx="1399.5" cy="456.7" r="3.6" fill="#fff" stroke="#3a1480" stroke-width="1.8"/>
<circle cx="1399.5" cy="529.6" r="3.6" fill="#fff" stroke="#b22d2d" stroke-width="1.8"/>
<circle cx="1399.5" cy="565.6" r="3.6" fill="#fff" stroke="#1e9bff" stroke-width="1.8"/>
</svg>
<div class="t" style="right:1354.40px;top:177.58px;font-size:11.2px;line-height:13.44px;color:#3b3bf0;">15</div>
<div class="t" style="right:1354.40px;top:221.06px;font-size:11.2px;line-height:13.44px;color:#3b3bf0;">12</div>
<div class="t" style="right:1354.40px;top:264.54px;font-size:11.2px;line-height:13.44px;color:#3b3bf0;">9</div>
<div class="t" style="right:1354.40px;top:308.02px;font-size:11.2px;line-height:13.44px;color:#3b3bf0;">6</div>
<div class="t" style="right:1354.40px;top:351.50px;font-size:11.2px;line-height:13.44px;color:#3b3bf0;">3</div>
<div class="t" style="right:1354.40px;top:394.98px;font-size:11.2px;line-height:13.44px;color:#3b3bf0;">0</div>
<div class="t" style="right:1282.40px;top:177.58px;font-size:11.2px;line-height:13.44px;color:#ff3b3b;">4,200</div>
<div class="t" style="right:1282.40px;top:221.06px;font-size:11.2px;line-height:13.44px;color:#ff3b3b;">3,360</div>
<div class="t" style="right:1282.40px;top:264.54px;font-size:11.2px;line-height:13.44px;color:#ff3b3b;">2,520</div>
<div class="t" style="right:1282.40px;top:308.02px;font-size:11.2px;line-height:13.44px;color:#ff3b3b;">1,680</div>
<div class="t" style="right:1282.40px;top:351.50px;font-size:11.2px;line-height:13.44px;color:#ff3b3b;">840</div>
<div class="t" style="right:1282.40px;top:394.98px;font-size:11.2px;line-height:13.44px;color:#ff3b3b;">0</div>
<div class="t" style="left:1821.80px;top:177.58px;font-size:11.2px;line-height:13.44px;color:#6aa86a;">150</div>
<div class="t" style="left:1821.80px;top:221.06px;font-size:11.2px;line-height:13.44px;color:#6aa86a;">120</div>
<div class="t" style="left:1821.80px;top:264.54px;font-size:11.2px;line-height:13.44px;color:#6aa86a;">90</div>
<div class="t" style="left:1821.80px;top:308.02px;font-size:11.2px;line-height:13.44px;color:#6aa86a;">60</div>
<div class="t" style="left:1821.80px;top:351.50px;font-size:11.2px;line-height:13.44px;color:#6aa86a;">30</div>
<div class="t" style="left:1821.80px;top:394.98px;font-size:11.2px;line-height:13.44px;color:#6aa86a;">0</div>
<div class="t" style="right:1354.40px;top:425.38px;font-size:11.2px;line-height:13.44px;color:#3fa0f5;">10</div>
<div class="t" style="right:1354.40px;top:468.76px;font-size:11.2px;line-height:13.44px;color:#3fa0f5;">8</div>
<div class="t" style="right:1354.40px;top:512.14px;font-size:11.2px;line-height:13.44px;color:#3fa0f5;">6</div>
<div class="t" style="right:1354.40px;top:555.52px;font-size:11.2px;line-height:13.44px;color:#3fa0f5;">4</div>
<div class="t" style="right:1354.40px;top:598.90px;font-size:11.2px;line-height:13.44px;color:#3fa0f5;">2</div>
<div class="t" style="right:1354.40px;top:642.28px;font-size:11.2px;line-height:13.44px;color:#3fa0f5;">0</div>
<div class="t" style="right:1282.40px;top:425.38px;font-size:11.2px;line-height:13.44px;color:#b03c3c;">60</div>
<div class="t" style="right:1282.40px;top:468.76px;font-size:11.2px;line-height:13.44px;color:#b03c3c;">48</div>
<div class="t" style="right:1282.40px;top:512.14px;font-size:11.2px;line-height:13.44px;color:#b03c3c;">36</div>
<div class="t" style="right:1282.40px;top:555.52px;font-size:11.2px;line-height:13.44px;color:#b03c3c;">24</div>
<div class="t" style="right:1282.40px;top:598.90px;font-size:11.2px;line-height:13.44px;color:#b03c3c;">12</div>
<div class="t" style="right:1282.40px;top:642.28px;font-size:11.2px;line-height:13.44px;color:#b03c3c;">0</div>
<div class="t" style="left:1821.80px;top:425.38px;font-size:11.2px;line-height:13.44px;color:#5a3c9c;">80</div>
<div class="t" style="left:1821.80px;top:468.76px;font-size:11.2px;line-height:13.44px;color:#5a3c9c;">64</div>
<div class="t" style="left:1821.80px;top:512.14px;font-size:11.2px;line-height:13.44px;color:#5a3c9c;">48</div>
<div class="t" style="left:1821.80px;top:555.52px;font-size:11.2px;line-height:13.44px;color:#5a3c9c;">32</div>
<div class="t" style="left:1821.80px;top:598.90px;font-size:11.2px;line-height:13.44px;color:#5a3c9c;">16</div>
<div class="t" style="left:1821.80px;top:642.28px;font-size:11.2px;line-height:13.44px;color:#5a3c9c;">0</div>
<div class="t" style="left:500.20px;width:100px;text-align:center;top:162.72px;font-size:10.8px;line-height:12.96px;color:#3b3bf0;">扬程(m)</div>
<div class="t" style="left:572.30px;width:100px;text-align:center;top:162.72px;font-size:10.8px;line-height:12.96px;color:#ff3b3b;">流量(m³/h)</div>
<div class="t" style="left:1786.00px;width:100px;text-align:center;top:162.52px;font-size:10.8px;line-height:12.96px;color:#6aa86a;">功率(kW)</div>
<div class="t" style="left:439.6px;top:555.2px;width:200px;height:16px;line-height:16px;text-align:center;font-size:10.8px;color:#3fa0f5;transform:rotate(-90deg)">综合耗能(kW·h/km³/m)</div>
<div class="t" style="left:512.3px;top:554.6px;width:200px;height:16px;line-height:16px;text-align:center;font-size:10.8px;color:#b03c3c;transform:rotate(-90deg)">千吨能耗(kW·h/km³)</div>
<div class="t" style="left:1745.5px;top:510.5px;width:200px;height:16px;line-height:16px;text-align:center;font-size:10.8px;color:#5a3c9c;transform:rotate(-90deg)">效率(%)</div>
<div class="t" style="right:1282.80px;top:669.76px;font-size:10.9px;line-height:13.08px;color:#6e7079;">1#机组(未开机)</div>
<div class="t" style="right:1282.80px;top:724.16px;font-size:10.9px;line-height:13.08px;color:#6e7079;">2#机组(24.0h)</div>
<div class="t" style="right:1282.80px;top:778.66px;font-size:10.9px;line-height:13.08px;color:#6e7079;">3#机组(24.0h)</div>
<div class="t" style="right:1282.80px;top:832.96px;font-size:10.9px;line-height:13.08px;color:#6e7079;">4#机组(未开机)</div>
<div class="t" style="left:1199.80px;width:60px;text-align:center;top:723.66px;font-size:10.9px;line-height:13.08px;color:#fff;">24h</div>
<div class="t" style="left:1199.80px;width:60px;text-align:center;top:778.16px;font-size:10.9px;line-height:13.08px;color:#fff;">24h</div>
<div class="t" style="left:614.80px;width:60px;text-align:center;top:872.06px;font-size:10.9px;line-height:13.08px;color:#6e7079;">00:00</div>
<div class="t" style="left:809.80px;width:60px;text-align:center;top:872.06px;font-size:10.9px;line-height:13.08px;color:#6e7079;">04:00</div>
<div class="t" style="left:1004.80px;width:60px;text-align:center;top:872.06px;font-size:10.9px;line-height:13.08px;color:#6e7079;">08:00</div>
<div class="t" style="left:1199.80px;width:60px;text-align:center;top:872.06px;font-size:10.9px;line-height:13.08px;color:#6e7079;">12:00</div>
<div class="t" style="left:1394.80px;width:60px;text-align:center;top:872.06px;font-size:10.9px;line-height:13.08px;color:#6e7079;">16:00</div>
<div class="t" style="left:1589.80px;width:60px;text-align:center;top:872.06px;font-size:10.9px;line-height:13.08px;color:#6e7079;">20:00</div>
<div class="t" style="left:1783.30px;width:60px;text-align:center;top:872.06px;font-size:10.9px;line-height:13.08px;color:#6e7079;">23:59</div>
<div class="b" style="left:1417px;top:289px;width:143px;height:151px;background:#fff;border-radius:4px;box-shadow:0 0 10px rgba(0,0,0,0.2);"></div>
<div class="t" style="left:1426.60px;top:299.66px;font-size:13.4px;line-height:16.08px;color:#666;">2024-04-29 15:28:48</div>
<div class="b" style="left:1426.2px;top:323.0px;width:8.6px;height:8.6px;border-radius:50%;background:#ff0000"></div>
<div class="t" style="left:1438.60px;top:319.68px;font-size:12.7px;line-height:15.24px;color:#666;">流量: 2826.8</div>
<div class="b" style="left:1426.2px;top:341.8px;width:8.6px;height:8.6px;border-radius:50%;background:#0000ff"></div>
<div class="t" style="left:1438.60px;top:338.48px;font-size:12.7px;line-height:15.24px;color:#666;">扬程: 8.63</div>
<div class="b" style="left:1426.2px;top:360.6px;width:8.6px;height:8.6px;border-radius:50%;background:#6aaa6a"></div>
<div class="t" style="left:1438.60px;top:357.28px;font-size:12.7px;line-height:15.24px;color:#666;">功率: 93.6</div>
<div class="b" style="left:1426.2px;top:379.4px;width:8.6px;height:8.6px;border-radius:50%;background:#2c0a5e"></div>
<div class="t" style="left:1438.60px;top:376.08px;font-size:12.7px;line-height:15.24px;color:#666;">效率: 70.9</div>
<div class="b" style="left:1426.2px;top:398.2px;width:8.6px;height:8.6px;border-radius:50%;background:#a52a2a"></div>
<div class="t" style="left:1438.60px;top:394.88px;font-size:12.7px;line-height:15.24px;color:#666;">千吨能耗: 33.11</div>
<div class="b" style="left:1426.2px;top:417.0px;width:8.6px;height:8.6px;border-radius:50%;background:#1e90ff"></div>
<div class="t" style="left:1438.60px;top:413.68px;font-size:12.7px;line-height:15.24px;color:#666;">综合耗能: 3.84</div>
<div class="b" style="left:1886px;top:764px;width:44px;height:142px;background:#b9bbbe;border-radius:9px;"></div>
<div class="b" style="left:1898px;top:778px;width:32px;height:128px;background:#d4d5d7;"></div>
<div class="b" style="left:1904px;top:784px;width:16px;height:1px;border-top:1px dotted #8a8c90;"></div>
<div class="b" style="left:1897.5px;top:775px;width:10px;height:10px;border-radius:50%;background:#1cc36a;box-shadow:0 0 0 1px #5f8fd0"></div>
<div class="b" style="left:1889px;top:796.5px;width:27px;height:1.0px;background:#a9b8b4;"></div>
<div class="b" style="left:1901px;top:792px;width:16px;height:16.5px;border:1px solid #555;box-sizing:border-box;background:#e3e3e3;"></div>
<div class="t" style="left:1902.5px;top:792px;font-size:13px;line-height:16px;color:#333">拼</div>
<div class="b" style="left:1898px;top:823px;width:11px;height:15px;background:linear-gradient(#d8e8a0,#9fe0d8);border-radius:0 0 5.5px 5.5px;"></div>
<div class="b" style="left:1889px;top:840.5px;width:27px;height:1.0px;background:#a9b8b4;"></div>
<div class="t" style="left:1897.00px;top:847.70px;font-size:10.5px;line-height:12.6px;color:#fff;">1.5</div>
<svg class="b" style="left:1890px;top:859px" width="8" height="10"><path d="M4 0.5 L7.5 4.5 H5 V9.5 H3 V4.5 H0.5 Z" fill="#20a0f0"/></svg>
<div class="t" style="left:1900.00px;top:860.30px;font-size:9.5px;line-height:11.4px;color:#eaeaea;">K/s</div>
<div class="t" style="left:1893.00px;top:875.20px;font-size:10.5px;line-height:12.6px;color:#fff;">65.0</div>
<svg class="b" style="left:1890px;top:886px" width="8" height="10"><path d="M4 9.5 L7.5 5.5 H5 V0.5 H3 V5.5 H0.5 Z" fill="#10b050"/></svg>
<div class="t" style="left:1900.00px;top:887.30px;font-size:9.5px;line-height:11.4px;color:#eaeaea;">K/s</div>
<div class="b" style="left:1900px;top:900px;width:16px;height:6px;border:1.5px solid #3a4a7a;border-bottom:none;box-sizing:border-box;"></div>
</body></html>
